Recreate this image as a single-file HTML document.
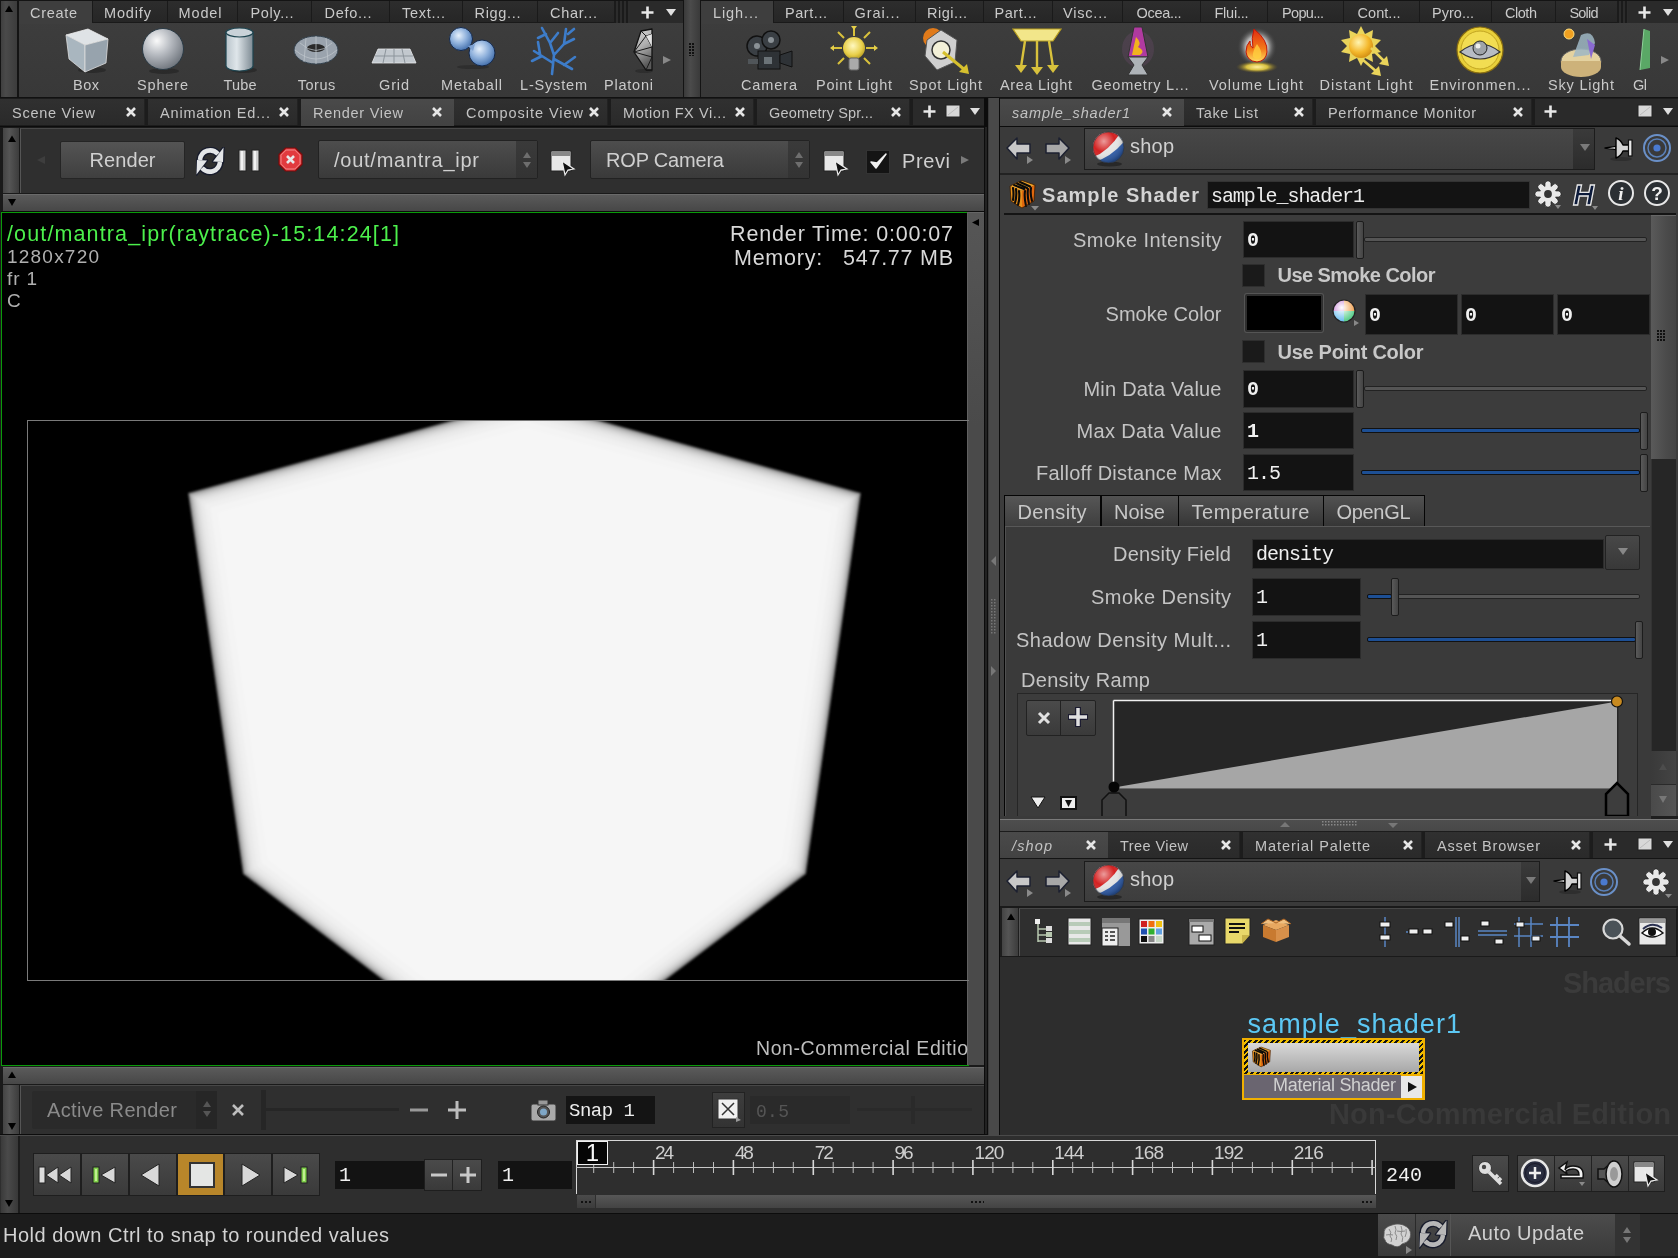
<!DOCTYPE html><html><head><meta charset="utf-8"><style>
html,body{margin:0;padding:0;width:1678px;height:1258px;overflow:hidden;background:#2b2b2b;}
.a{position:absolute;box-sizing:border-box;}
.t{white-space:pre;}
body{font-family:"Liberation Sans",sans-serif;}
</style></head><body>
<div class="a" style="left:0;top:0;width:1678px;height:1258px;will-change:transform;overflow:hidden">
<div class="a" style="left:0px;top:0px;width:1678px;height:1258px;background:#1e1e1e;"></div>
<div class="a" style="left:0px;top:0px;width:1678px;height:98px;background:#141414;"></div>
<div class="a" style="left:1px;top:1px;width:16px;height:96px;background:linear-gradient(90deg,#3f3f3f,#4a4a4a 30%,#3c3c3c);"></div>
<svg class="a" style="left:4px;top:4px;" width="10" height="9" viewBox="0 0 10 9"><path d="M1 8 L5 1.5 L9 8 Z" fill="#000"/></svg>
<div class="a" style="left:19px;top:1px;width:664px;height:96px;background:linear-gradient(#3e3e3e,#383838);"></div>
<div class="a" style="left:701px;top:1px;width:977px;height:96px;background:linear-gradient(#3e3e3e,#383838);"></div>
<div class="a" style="left:684px;top:0px;width:16px;height:98px;background:linear-gradient(90deg,#3a3a3a,#4b4b4b 40%,#3a3a3a);"></div>
<svg class="a" style="left:688px;top:42px;" width="8" height="14" viewBox="0 0 8 14"><rect x="1" y="1" width="2" height="2" fill="#111"/><rect x="4" y="1" width="2" height="2" fill="#111"/><rect x="1" y="4" width="2" height="2" fill="#111"/><rect x="4" y="4" width="2" height="2" fill="#111"/><rect x="1" y="7" width="2" height="2" fill="#111"/><rect x="4" y="7" width="2" height="2" fill="#111"/><rect x="1" y="10" width="2" height="2" fill="#111"/><rect x="4" y="10" width="2" height="2" fill="#111"/><rect x="1" y="13" width="2" height="2" fill="#111"/><rect x="4" y="13" width="2" height="2" fill="#111"/></svg>
<div class="a" style="left:92px;top:1px;width:591px;height:22px;background:#1a1a1a;"></div>
<div class="a" style="left:19px;top:1px;width:73px;height:23px;background:#3e3e3e;"></div>
<div class="a t" style="left:30.00px;top:4.88px;font-size:14.5px;line-height:16.20px;color:#c9c9c9;font-family:'Liberation Sans',sans-serif;letter-spacing:0.695px;">Create</div>
<div class="a" style="left:93px;top:1px;width:74px;height:21px;background:linear-gradient(#2d2d2d,#262626);"></div>
<div class="a t" style="left:104.00px;top:4.88px;font-size:14.5px;line-height:16.20px;color:#c9c9c9;font-family:'Liberation Sans',sans-serif;letter-spacing:0.858px;">Modify</div>
<div class="a" style="left:168px;top:1px;width:69px;height:21px;background:linear-gradient(#2d2d2d,#262626);"></div>
<div class="a t" style="left:178.50px;top:4.88px;font-size:14.5px;line-height:16.20px;color:#c9c9c9;font-family:'Liberation Sans',sans-serif;letter-spacing:0.876px;">Model</div>
<div class="a" style="left:238px;top:1px;width:73px;height:21px;background:linear-gradient(#2d2d2d,#262626);"></div>
<div class="a t" style="left:250.50px;top:4.88px;font-size:14.5px;line-height:16.20px;color:#c9c9c9;font-family:'Liberation Sans',sans-serif;letter-spacing:0.631px;">Poly...</div>
<div class="a" style="left:312px;top:1px;width:77px;height:21px;background:linear-gradient(#2d2d2d,#262626);"></div>
<div class="a t" style="left:324.50px;top:4.88px;font-size:14.5px;line-height:16.20px;color:#c9c9c9;font-family:'Liberation Sans',sans-serif;letter-spacing:0.714px;">Defo...</div>
<div class="a" style="left:390px;top:1px;width:72px;height:21px;background:linear-gradient(#2d2d2d,#262626);"></div>
<div class="a t" style="left:402.00px;top:4.88px;font-size:14.5px;line-height:16.20px;color:#c9c9c9;font-family:'Liberation Sans',sans-serif;letter-spacing:0.720px;">Text...</div>
<div class="a" style="left:463px;top:1px;width:74px;height:21px;background:linear-gradient(#2d2d2d,#262626);"></div>
<div class="a t" style="left:474.50px;top:4.88px;font-size:14.5px;line-height:16.20px;color:#c9c9c9;font-family:'Liberation Sans',sans-serif;letter-spacing:0.682px;">Rigg...</div>
<div class="a" style="left:538px;top:1px;width:76px;height:21px;background:linear-gradient(#2d2d2d,#262626);"></div>
<div class="a t" style="left:550.00px;top:4.88px;font-size:14.5px;line-height:16.20px;color:#c9c9c9;font-family:'Liberation Sans',sans-serif;letter-spacing:0.714px;">Char...</div>
<div class="a" style="left:614px;top:1px;width:16px;height:22px;background:repeating-linear-gradient(90deg,#1b1b1b 0 2px,#2c2c2c 2px 4px);"></div>
<div class="a" style="left:630px;top:1px;width:53px;height:22px;background:#2a2a2a;"></div>
<svg class="a" style="left:640px;top:5px;" width="15" height="15" viewBox="0 0 15 15"><path d="M7.5 1.5v12M1.5 7.5h12" stroke="#e8e8e8" stroke-width="2.6"/></svg>
<svg class="a" style="left:665px;top:8px;" width="12" height="9" viewBox="0 0 12 9"><path d="M1 1h10L6 8z" fill="#e0e0e0"/></svg>
<div class="a" style="left:702px;top:1px;width:976px;height:22px;background:#1a1a1a;"></div>
<div class="a" style="left:702px;top:1px;width:71px;height:23px;background:#3e3e3e;"></div>
<div class="a t" style="left:713.00px;top:4.88px;font-size:14.5px;line-height:16.20px;color:#c9c9c9;font-family:'Liberation Sans',sans-serif;letter-spacing:0.917px;">Ligh...</div>
<div class="a" style="left:774px;top:1px;width:69px;height:21px;background:linear-gradient(#2d2d2d,#262626);"></div>
<div class="a t" style="left:785.00px;top:4.88px;font-size:14.5px;line-height:16.20px;color:#c9c9c9;font-family:'Liberation Sans',sans-serif;letter-spacing:0.554px;">Part...</div>
<div class="a" style="left:844px;top:1px;width:71px;height:21px;background:linear-gradient(#2d2d2d,#262626);"></div>
<div class="a t" style="left:854.50px;top:4.88px;font-size:14.5px;line-height:16.20px;color:#c9c9c9;font-family:'Liberation Sans',sans-serif;letter-spacing:0.920px;">Grai...</div>
<div class="a" style="left:916px;top:1px;width:67px;height:21px;background:linear-gradient(#2d2d2d,#262626);"></div>
<div class="a t" style="left:927.00px;top:4.88px;font-size:14.5px;line-height:16.20px;color:#c9c9c9;font-family:'Liberation Sans',sans-serif;letter-spacing:0.489px;">Rigi...</div>
<div class="a" style="left:984px;top:1px;width:68px;height:21px;background:linear-gradient(#2d2d2d,#262626);"></div>
<div class="a t" style="left:994.50px;top:4.88px;font-size:14.5px;line-height:16.20px;color:#c9c9c9;font-family:'Liberation Sans',sans-serif;letter-spacing:0.554px;">Part...</div>
<div class="a" style="left:1053px;top:1px;width:69px;height:21px;background:linear-gradient(#2d2d2d,#262626);"></div>
<div class="a t" style="left:1063.00px;top:4.88px;font-size:14.5px;line-height:16.20px;color:#c9c9c9;font-family:'Liberation Sans',sans-serif;letter-spacing:0.797px;">Visc...</div>
<div class="a" style="left:1123px;top:1px;width:77px;height:21px;background:linear-gradient(#2d2d2d,#262626);"></div>
<div class="a t" style="left:1136.50px;top:4.88px;font-size:14.5px;line-height:16.20px;color:#c9c9c9;font-family:'Liberation Sans',sans-serif;letter-spacing:-0.290px;">Ocea...</div>
<div class="a" style="left:1201px;top:1px;width:66px;height:21px;background:linear-gradient(#2d2d2d,#262626);"></div>
<div class="a t" style="left:1214.50px;top:4.88px;font-size:14.5px;line-height:16.20px;color:#c9c9c9;font-family:'Liberation Sans',sans-serif;letter-spacing:-0.242px;">Flui...</div>
<div class="a" style="left:1268px;top:1px;width:75px;height:21px;background:linear-gradient(#2d2d2d,#262626);"></div>
<div class="a t" style="left:1282.00px;top:4.88px;font-size:14.5px;line-height:16.20px;color:#c9c9c9;font-family:'Liberation Sans',sans-serif;letter-spacing:-0.658px;">Popu...</div>
<div class="a" style="left:1344px;top:1px;width:75px;height:21px;background:linear-gradient(#2d2d2d,#262626);"></div>
<div class="a t" style="left:1357.50px;top:4.88px;font-size:14.5px;line-height:16.20px;color:#c9c9c9;font-family:'Liberation Sans',sans-serif;letter-spacing:0.048px;">Cont...</div>
<div class="a" style="left:1420px;top:1px;width:71px;height:21px;background:linear-gradient(#2d2d2d,#262626);"></div>
<div class="a t" style="left:1432.00px;top:4.88px;font-size:14.5px;line-height:16.20px;color:#c9c9c9;font-family:'Liberation Sans',sans-serif;letter-spacing:0.017px;">Pyro...</div>
<div class="a" style="left:1492px;top:1px;width:63px;height:21px;background:linear-gradient(#2d2d2d,#262626);"></div>
<div class="a t" style="left:1505.00px;top:4.88px;font-size:14.5px;line-height:16.20px;color:#c9c9c9;font-family:'Liberation Sans',sans-serif;letter-spacing:-0.463px;">Cloth</div>
<div class="a" style="left:1556px;top:1px;width:61px;height:21px;background:linear-gradient(#2d2d2d,#262626);"></div>
<div class="a t" style="left:1569.50px;top:4.88px;font-size:14.5px;line-height:16.20px;color:#c9c9c9;font-family:'Liberation Sans',sans-serif;letter-spacing:-0.811px;">Solid</div>
<div class="a" style="left:1617px;top:1px;width:11px;height:22px;background:repeating-linear-gradient(90deg,#1b1b1b 0 2px,#2c2c2c 2px 4px);"></div>
<div class="a" style="left:1628px;top:1px;width:50px;height:22px;background:#2a2a2a;"></div>
<svg class="a" style="left:1637px;top:5px;" width="15" height="15" viewBox="0 0 15 15"><path d="M7.5 1.5v12M1.5 7.5h12" stroke="#e8e8e8" stroke-width="2.6"/></svg>
<svg class="a" style="left:1662px;top:8px;" width="12" height="9" viewBox="0 0 12 9"><path d="M1 1h10L6 8z" fill="#e0e0e0"/></svg>
<div class="a" style="left:0px;top:97px;width:1678px;height:1px;background:#111;"></div>
<div class="a t" style="left:73.00px;top:76.88px;font-size:14.5px;line-height:16.20px;color:#c9c9c9;font-family:'Liberation Sans',sans-serif;letter-spacing:0.507px;">Box</div>
<div class="a t" style="left:137.00px;top:76.88px;font-size:14.5px;line-height:16.20px;color:#c9c9c9;font-family:'Liberation Sans',sans-serif;letter-spacing:0.848px;">Sphere</div>
<div class="a t" style="left:223.50px;top:76.88px;font-size:14.5px;line-height:16.20px;color:#c9c9c9;font-family:'Liberation Sans',sans-serif;letter-spacing:0.162px;">Tube</div>
<div class="a t" style="left:297.75px;top:76.88px;font-size:14.5px;line-height:16.20px;color:#c9c9c9;font-family:'Liberation Sans',sans-serif;letter-spacing:0.510px;">Torus</div>
<div class="a t" style="left:379.00px;top:76.88px;font-size:14.5px;line-height:16.20px;color:#c9c9c9;font-family:'Liberation Sans',sans-serif;letter-spacing:0.869px;">Grid</div>
<div class="a t" style="left:441.00px;top:76.88px;font-size:14.5px;line-height:16.20px;color:#c9c9c9;font-family:'Liberation Sans',sans-serif;letter-spacing:0.884px;">Metaball</div>
<div class="a t" style="left:520.00px;top:76.88px;font-size:14.5px;line-height:16.20px;color:#c9c9c9;font-family:'Liberation Sans',sans-serif;letter-spacing:0.823px;">L-System</div>
<div class="a t" style="left:604.00px;top:76.88px;font-size:14.5px;line-height:16.20px;color:#c9c9c9;font-family:'Liberation Sans',sans-serif;letter-spacing:0.777px;">Platoni</div>
<div class="a t" style="left:741.00px;top:76.88px;font-size:14.5px;line-height:16.20px;color:#c9c9c9;font-family:'Liberation Sans',sans-serif;letter-spacing:0.885px;">Camera</div>
<div class="a t" style="left:816.00px;top:76.88px;font-size:14.5px;line-height:16.20px;color:#c9c9c9;font-family:'Liberation Sans',sans-serif;letter-spacing:0.748px;">Point Light</div>
<div class="a t" style="left:909.00px;top:76.88px;font-size:14.5px;line-height:16.20px;color:#c9c9c9;font-family:'Liberation Sans',sans-serif;letter-spacing:0.855px;">Spot Light</div>
<div class="a t" style="left:1000.00px;top:76.88px;font-size:14.5px;line-height:16.20px;color:#c9c9c9;font-family:'Liberation Sans',sans-serif;letter-spacing:0.655px;">Area Light</div>
<div class="a t" style="left:1091.50px;top:76.88px;font-size:14.5px;line-height:16.20px;color:#c9c9c9;font-family:'Liberation Sans',sans-serif;letter-spacing:0.764px;">Geometry L...</div>
<div class="a t" style="left:1209.00px;top:76.88px;font-size:14.5px;line-height:16.20px;color:#c9c9c9;font-family:'Liberation Sans',sans-serif;letter-spacing:0.924px;">Volume Light</div>
<div class="a t" style="left:1319.50px;top:76.88px;font-size:14.5px;line-height:16.20px;color:#c9c9c9;font-family:'Liberation Sans',sans-serif;letter-spacing:1.033px;">Distant Light</div>
<div class="a t" style="left:1429.50px;top:76.88px;font-size:14.5px;line-height:16.20px;color:#c9c9c9;font-family:'Liberation Sans',sans-serif;letter-spacing:0.962px;">Environmen...</div>
<div class="a t" style="left:1548.00px;top:76.88px;font-size:14.5px;line-height:16.20px;color:#c9c9c9;font-family:'Liberation Sans',sans-serif;letter-spacing:0.795px;">Sky Light</div>
<div class="a t" style="left:1633.00px;top:76.88px;font-size:14.5px;line-height:16.20px;color:#c9c9c9;font-family:'Liberation Sans',sans-serif;letter-spacing:-0.500px;">Gl</div>
<svg class="a" style="left:62px;top:26px;" width="48" height="50" viewBox="0 0 48 50"><defs>
<radialGradient id="gSph" cx="0.35" cy="0.3" r="0.75"><stop offset="0" stop-color="#fafafa"/><stop offset="0.45" stop-color="#b8bcc2"/><stop offset="1" stop-color="#6d737b"/></radialGradient>
<radialGradient id="gBlue" cx="0.4" cy="0.35" r="0.7"><stop offset="0" stop-color="#e6f0fb"/><stop offset="0.5" stop-color="#8fb1dc"/><stop offset="1" stop-color="#3d6aa8"/></radialGradient>
<linearGradient id="gTube" x1="0" x2="1"><stop offset="0" stop-color="#b9c4cb"/><stop offset="0.4" stop-color="#dfe6ea"/><stop offset="1" stop-color="#7d8a93"/></linearGradient>
<radialGradient id="gYel" cx="0.45" cy="0.4" r="0.7"><stop offset="0" stop-color="#fff8c0"/><stop offset="0.6" stop-color="#e8cf4a"/><stop offset="1" stop-color="#a58a14"/></radialGradient>
<radialGradient id="gSun" cx="0.4" cy="0.35" r="0.7"><stop offset="0" stop-color="#fff4b0"/><stop offset="0.6" stop-color="#f4b82c"/><stop offset="1" stop-color="#d08a10"/></radialGradient>
</defs><ellipse cx="30" cy="44" rx="14" ry="3" fill="#222" opacity=".6"/>
<path d="M4 9 L26 3 L46 13 L23 19Z" fill="#dfe3e6" stroke="#eee" stroke-width=".8"/>
<path d="M4 9 L23 19 L23 46 L7 33Z" fill="#a9b6bf" stroke="#ddd" stroke-width=".8"/>
<path d="M23 19 L46 13 L44 37 L23 46Z" fill="#97a3ad" stroke="#ddd" stroke-width=".8"/></svg>
<svg class="a" style="left:138px;top:26px;" width="50" height="50" viewBox="0 0 50 50"><ellipse cx="26" cy="45" rx="15" ry="3" fill="#222" opacity=".6"/><circle cx="25" cy="23" r="20.5" fill="url(#gSph)" stroke="#2a3a45" stroke-width="1"/></svg>
<svg class="a" style="left:222px;top:26px;" width="38" height="50" viewBox="0 0 38 50"><ellipse cx="22" cy="44" rx="13" ry="3" fill="#222" opacity=".6"/>
<path d="M4 6 V40 A13.5 5 0 0 0 31 40 V6Z" fill="url(#gTube)" stroke="#1f4550" stroke-width="1.2"/>
<ellipse cx="17.5" cy="6.5" rx="13.5" ry="4.5" fill="#c9d2d8" stroke="#1f4550" stroke-width="1.2"/></svg>
<svg class="a" style="left:292px;top:34px;" width="50" height="36" viewBox="0 0 50 36"><ellipse cx="24" cy="16" rx="22" ry="14" fill="#9aa3ad" stroke="#34424e" stroke-width="1"/>
<ellipse cx="24" cy="14" rx="9" ry="4" fill="#2a2a2a"/>
<path d="M3 16 Q24 34 45 16 M8 9 Q24 24 40 9" fill="none" stroke="#c2c8ce" stroke-width=".7"/>
<path d="M14 4 L12 28 M24 2 V30 M34 4 L36 28" stroke="#c2c8ce" stroke-width=".7"/></svg>
<svg class="a" style="left:370px;top:46px;" width="48" height="20" viewBox="0 0 48 20"><path d="M8 3 H40 L46 17 H2Z" fill="#c2c8ce" stroke="#e8eaec" stroke-width=".8"/><path d="M5 10H43M16 3L13 17M24 3V17M32 3L35 17" stroke="#8c949b" stroke-width="1"/></svg>
<svg class="a" style="left:446px;top:25px;" width="52" height="45" viewBox="0 0 52 45"><ellipse cx="27" cy="42" rx="16" ry="2" fill="#222" opacity=".5"/><circle cx="15" cy="14" r="11.5" fill="url(#gBlue)" stroke="#14284a" stroke-width="1"/><circle cx="36" cy="28" r="13" fill="url(#gBlue)" stroke="#14284a" stroke-width="1"/><path d="M22 21 L29 19 L27 26Z" fill="#7fa2d2"/></svg>
<svg class="a" style="left:528px;top:25px;" width="52" height="52" viewBox="0 0 52 52"><g stroke="#3d7cc9" stroke-width="2.6" fill="none" stroke-linecap="round"><path d="M24 49 L26 30 L22 18 L14 3 M26 30 L36 19 L38 4 M22 18 L30 8 M36 19 L46 14 M26 34 L44 44 M25 38 L6 26 M14 31 L4 36 M12 29 L10 17 M36 40 L47 32 M40 9 L46 4 M18 9 L10 13"/></g></svg>
<svg class="a" style="left:632px;top:27px;" width="22" height="46" viewBox="0 0 22 46"><defs><linearGradient id="gPl" x1="0" y1="0" x2="0.3" y2="1"><stop offset="0" stop-color="#d8d8d8"/><stop offset=".5" stop-color="#b0b0b0"/><stop offset="1" stop-color="#5a5a5a"/></linearGradient></defs>
<ellipse cx="12" cy="44" rx="9" ry="2" fill="#222" opacity=".5"/>
<path d="M20 2 L9 4 L2 25 L14 43 L20 43Z" fill="url(#gPl)" stroke="#111" stroke-width="1.3" stroke-linejoin="round"/>
<path d="M9 4 L14 9 L20 7 M14 9 L2 25 M14 9 L20 20 M2 25 L20 30 M2 25 L20 20 M20 30 L14 43" stroke="#1a1a1a" stroke-width="1" fill="none"/>
<path d="M14 9 L20 7 L20 20Z" fill="#f0f0f0" opacity=".8"/></svg>
<svg class="a" style="left:662px;top:55px;" width="10" height="10" viewBox="0 0 10 10"><path d="M1 1 L9 5 L1 9Z" fill="#888"/></svg>
<svg class="a" style="left:744px;top:29px;" width="52" height="46" viewBox="0 0 52 46"><circle cx="13" cy="17" r="10" fill="#3a3f44" stroke="#111" stroke-width="1.5"/><circle cx="27" cy="11" r="9" fill="#3a3f44" stroke="#111" stroke-width="1.5"/>
<circle cx="13" cy="17" r="3" fill="#8a9196"/><circle cx="27" cy="11" r="3" fill="#8a9196"/>
<rect x="14" y="22" width="22" height="18" fill="#2e3236" stroke="#111"/><path d="M36 26 L48 22 V38 L36 34Z" fill="#2e3236" stroke="#111"/><rect x="20" y="28" width="8" height="7" fill="#6b7378"/><rect x="4" y="30" width="10" height="5" fill="#505559"/></svg>
<svg class="a" style="left:828px;top:26px;" width="52" height="50" viewBox="0 0 52 50"><g stroke="#d8c13c" stroke-width="2" fill="#e5cf4a"><path d="M26 2 V10 M6 22 H14 M38 22 H46 M10 6 L16 12 M42 6 L36 12 M10 38 L16 32 M42 38 L36 32"/></g>
<path d="M23 0 L26 4 L29 0Z M2 22 L6 19 V25Z M50 22 L46 19 V25Z" fill="#e5cf4a"/>
<circle cx="26" cy="22" r="11" fill="url(#gYel)"/><rect x="21" y="32" width="10" height="12" rx="2" fill="#aaa" stroke="#666"/></svg>
<svg class="a" style="left:921px;top:26px;" width="52" height="50" viewBox="0 0 52 50"><circle cx="12" cy="12" r="10" fill="#e07a1a"/><path d="M6 14 L20 4 L36 14 L34 36 L16 44 L4 30Z" fill="#cfcfcf" stroke="#555" stroke-width="1"/>
<circle cx="20" cy="24" r="9" fill="#f3f0d8" stroke="#333" stroke-width="1.5"/><path d="M22 26 L44 44" stroke="#d6c02e" stroke-width="3"/><path d="M48 48 L38 46 L46 38Z" fill="#d6c02e"/></svg>
<svg class="a" style="left:1011px;top:27px;" width="52" height="50" viewBox="0 0 52 50"><path d="M2 2 H50 L42 14 H10Z" fill="#f2e68a" stroke="#b89e1e" stroke-width="1.2"/><g stroke="#d8c13c" stroke-width="2.4"><path d="M14 14 L10 40 M26 14 V42 M38 14 L42 40"/></g>
<path d="M4 38 H16 L10 46Z M20 40 H32 L26 48Z M36 38 H48 L42 46Z" fill="#d8c13c"/></svg>
<svg class="a" style="left:1116px;top:25px;" width="44" height="52" viewBox="0 0 44 52"><ellipse cx="22" cy="24" rx="16" ry="18" fill="#6a4a6a" opacity=".35"/><path d="M18 2 H26 L32 32 H12Z" fill="#b03aa0" stroke="#333" stroke-width="1"/>
<path d="M20 12 Q26 18 22 22 Q30 26 24 30 H16 Q18 20 20 12Z" fill="#f2b21e"/><path d="M12 32 H32 L26 40 L32 50 H12 L18 40Z" fill="#aeb3b8" stroke="#333"/></svg>
<svg class="a" style="left:1232px;top:26px;" width="50" height="48" viewBox="0 0 50 48"><defs><radialGradient id="gVol" cx=".5" cy=".5" r=".5"><stop offset="0" stop-color="#e0e0e0"/><stop offset=".55" stop-color="#b8b8b8"/><stop offset="1" stop-color="#3a3a3a" stop-opacity="0"/></radialGradient>
<radialGradient id="gVolY" cx=".5" cy=".5" r=".5"><stop offset="0" stop-color="#fff0a0"/><stop offset=".5" stop-color="#d8c040"/><stop offset="1" stop-color="#6a5a20" stop-opacity="0"/></radialGradient>
<linearGradient id="gFl" x1="0" y1="0" x2="0" y2="1"><stop offset="0" stop-color="#e02a10"/><stop offset=".6" stop-color="#f47a18"/><stop offset="1" stop-color="#ffe060"/></linearGradient></defs>
<circle cx="25" cy="21" r="20" fill="url(#gVol)"/><ellipse cx="25" cy="41" rx="21" ry="6" fill="url(#gVolY)"/>
<path d="M22 3 Q36 14 35 26 Q34 35 25 36 Q15 35 14 26 Q14 19 18 15 Q18 21 21 22 Q19 12 22 3Z" fill="url(#gFl)" stroke="#c01808" stroke-width="1"/>
<path d="M25 18 Q31 26 29 31 Q25 35 21 31 Q20 26 25 18Z" fill="#ffd040" opacity=".8"/></svg>
<svg class="a" style="left:1341px;top:26px;" width="52" height="50" viewBox="0 0 52 50"><path d="M20 0 L24 8 L32 4 L31 12 L40 14 L34 20 L40 26 L31 28 L32 36 L24 32 L20 40 L16 32 L8 36 L9 28 L0 26 L6 20 L0 14 L9 12 L8 4 L16 8Z" fill="#ead45a"/>
<circle cx="20" cy="20" r="12" fill="url(#gSun)"/><g stroke="#ead45a" stroke-width="2.5"><path d="M30 22 L44 36 M22 34 L36 46"/></g><path d="M48 40 L46 30 L38 38Z M40 50 L38 40 L30 48Z" fill="#ead45a"/></svg>
<svg class="a" style="left:1455px;top:26px;" width="50" height="50" viewBox="0 0 50 50"><circle cx="25" cy="24" r="23" fill="#e8cf3a" stroke="#8a6e10" stroke-width="1.2"/><circle cx="25" cy="24" r="19" fill="#f2dd52" stroke="#c2a521" stroke-width="1"/>
<path d="M5 26 Q25 10 45 26 Q25 40 5 26Z" fill="#b7bcc4" stroke="#333" stroke-width="1.2"/><circle cx="25" cy="22" r="7" fill="#9ea3a8" stroke="#222"/><circle cx="23" cy="20" r="2.5" fill="#eee"/></svg>
<svg class="a" style="left:1557px;top:25px;" width="50" height="52" viewBox="0 0 50 52"><ellipse cx="24" cy="36" rx="20" ry="12" fill="#e4d2a0" stroke="#666" stroke-width="1"/><path d="M4 36 V42 A20 10 0 0 0 44 42 V36" fill="#cdb27a"/>
<path d="M16 32 L24 10 Q36 4 38 18 L32 30Z" fill="#9fb7c4" opacity=".85"/><path d="M30 14 L38 20 L34 34 Z" fill="#8a6ad0"/><circle cx="12" cy="9" r="5" fill="#f0a020" stroke="#ffe080"/></svg>
<svg class="a" style="left:1638px;top:28px;" width="14" height="44" viewBox="0 0 14 44"><path d="M6 1 L12 3 V40 L2 42Z" fill="#5aa866"/><path d="M6 1 L2 42" stroke="#8fd29a" stroke-width="1"/></svg>
<svg class="a" style="left:1660px;top:55px;" width="10" height="10" viewBox="0 0 10 10"><path d="M1 1 L9 5 L1 9Z" fill="#888"/></svg>
<div class="a" style="left:0px;top:98px;width:985px;height:29px;background:#1c1c1c;"></div>
<div class="a" style="left:0px;top:99px;width:145px;height:26px;background:linear-gradient(#303030,#2a2a2a);border-right:1px solid #222;"></div>
<div class="a t" style="left:12.00px;top:104.88px;font-size:14.5px;line-height:16.20px;color:#c3c3c3;font-family:'Liberation Sans',sans-serif;letter-spacing:0.743px;">Scene View</div>
<svg class="a" style="left:125px;top:106px;" width="12" height="12" viewBox="0 0 12 12"><path d="M2 2L10 10M10 2L2 10" stroke="#e6e6e6" stroke-width="2.6"/></svg>
<div class="a" style="left:148px;top:99px;width:150px;height:26px;background:linear-gradient(#303030,#2a2a2a);border-right:1px solid #222;"></div>
<div class="a t" style="left:160.00px;top:104.88px;font-size:14.5px;line-height:16.20px;color:#c3c3c3;font-family:'Liberation Sans',sans-serif;letter-spacing:0.834px;">Animation Ed...</div>
<svg class="a" style="left:278px;top:106px;" width="12" height="12" viewBox="0 0 12 12"><path d="M2 2L10 10M10 2L2 10" stroke="#e6e6e6" stroke-width="2.6"/></svg>
<div class="a" style="left:301px;top:99px;width:153px;height:27px;background:linear-gradient(#4a4a4a,#424242);"></div>
<div class="a t" style="left:313.00px;top:104.88px;font-size:14.5px;line-height:16.20px;color:#c3c3c3;font-family:'Liberation Sans',sans-serif;letter-spacing:0.724px;">Render View</div>
<svg class="a" style="left:431px;top:106px;" width="12" height="12" viewBox="0 0 12 12"><path d="M2 2L10 10M10 2L2 10" stroke="#e6e6e6" stroke-width="2.6"/></svg>
<div class="a" style="left:454px;top:99px;width:154px;height:26px;background:linear-gradient(#303030,#2a2a2a);border-right:1px solid #222;"></div>
<div class="a t" style="left:466.00px;top:104.88px;font-size:14.5px;line-height:16.20px;color:#c3c3c3;font-family:'Liberation Sans',sans-serif;letter-spacing:0.961px;">Composite View</div>
<svg class="a" style="left:588px;top:106px;" width="12" height="12" viewBox="0 0 12 12"><path d="M2 2L10 10M10 2L2 10" stroke="#e6e6e6" stroke-width="2.6"/></svg>
<div class="a" style="left:611px;top:99px;width:143px;height:26px;background:linear-gradient(#303030,#2a2a2a);border-right:1px solid #222;"></div>
<div class="a t" style="left:623.00px;top:104.88px;font-size:14.5px;line-height:16.20px;color:#c3c3c3;font-family:'Liberation Sans',sans-serif;letter-spacing:0.584px;">Motion FX Vi...</div>
<svg class="a" style="left:734px;top:106px;" width="12" height="12" viewBox="0 0 12 12"><path d="M2 2L10 10M10 2L2 10" stroke="#e6e6e6" stroke-width="2.6"/></svg>
<div class="a" style="left:757px;top:99px;width:153px;height:26px;background:linear-gradient(#303030,#2a2a2a);border-right:1px solid #222;"></div>
<div class="a t" style="left:769.00px;top:104.88px;font-size:14.5px;line-height:16.20px;color:#c3c3c3;font-family:'Liberation Sans',sans-serif;letter-spacing:0.176px;">Geometry Spr...</div>
<svg class="a" style="left:890px;top:106px;" width="12" height="12" viewBox="0 0 12 12"><path d="M2 2L10 10M10 2L2 10" stroke="#e6e6e6" stroke-width="2.6"/></svg>
<div class="a" style="left:913px;top:99px;width:72px;height:26px;background:#2a2a2a;"></div>
<svg class="a" style="left:922px;top:104px;" width="15" height="15" viewBox="0 0 15 15"><path d="M7.5 1.5v12M1.5 7.5h12" stroke="#e8e8e8" stroke-width="2.6"/></svg>
<svg class="a" style="left:945px;top:103px;" width="16" height="16" viewBox="0 0 16 16"><rect x="1" y="2" width="14" height="12" fill="#d8d8d8" stroke="#222" stroke-width="1"/><path d="M3 12 L13 4" stroke="#bbb"/></svg>
<svg class="a" style="left:969px;top:107px;" width="12" height="9" viewBox="0 0 12 9"><path d="M1 1h10L6 8z" fill="#e0e0e0"/></svg>
<div class="a" style="left:0px;top:126px;width:985px;height:1px;background:#0c0c0c;"></div>
<div class="a" style="left:0px;top:127px;width:986px;height:1008px;background:#1a1a1a;"></div>
<div class="a" style="left:3px;top:128px;width:16px;height:65px;background:linear-gradient(90deg,#444,#555 40%,#3c3c3c);"></div>
<svg class="a" style="left:7px;top:134px;" width="10" height="9" viewBox="0 0 10 9"><path d="M1 8 L5 1.5 L9 8 Z" fill="#000"/></svg>
<div class="a" style="left:20px;top:128px;width:965px;height:65px;background:#2f2f2f;border-left:1px solid #555;border-top:1px solid #474747;"></div>
<svg class="a" style="left:36px;top:155px;" width="10" height="10" viewBox="0 0 10 10"><path d="M9 1 L1 5 L9 9Z" fill="#3e3e3e"/></svg>
<div class="a" style="left:60px;top:141px;width:125px;height:38px;background:linear-gradient(#545454,#3f3f3f);border:1px solid #252525;border-radius:2px;"></div>
<div class="a t" style="left:89.50px;top:149.40px;font-size:20px;line-height:22.34px;color:#d0d0d0;font-family:'Liberation Sans',sans-serif;letter-spacing:0.080px;">Render</div>
<svg class="a" style="left:196px;top:147px;" width="30" height="30" viewBox="0 0 30 30"><g transform="scale(1.0)"><g fill="none" stroke="#181c2c" stroke-width="7.5" stroke-linecap="butt"><path d="M4 13 C5 3 16 0.5 22 7"/><path d="M24 15 C23 25 12 27.5 6 21"/></g>
<polygon points="27.5,0.5 27,15 17,14.5" fill="#181c2c" stroke="#181c2c" stroke-width="2.5" stroke-linejoin="round"/><polygon points="0.5,27.5 1,13 11,13.5" fill="#181c2c" stroke="#181c2c" stroke-width="2.5" stroke-linejoin="round"/>
<g fill="none" stroke="#e4e6e8" stroke-width="4.6" stroke-linecap="butt"><path d="M4 13 C5 3 16 0.5 22 7"/><path d="M24 15 C23 25 12 27.5 6 21"/></g>
<polygon points="27.5,0.5 27,15 17,14.5" fill="#e4e6e8"/><polygon points="0.5,27.5 1,13 11,13.5" fill="#e4e6e8"/></g></svg>
<svg class="a" style="left:238px;top:149px;" width="24" height="24" viewBox="0 0 24 24"><rect x="1" y="1" width="7" height="21" fill="#d0d0d0" stroke="#222"/><rect x="14" y="1" width="7" height="21" fill="#d0d0d0" stroke="#222"/><rect x="3" y="2" width="2" height="19" fill="#f2f2f2"/><rect x="16" y="2" width="2" height="19" fill="#f2f2f2"/></svg>
<svg class="a" style="left:278px;top:147px;" width="25" height="25" viewBox="0 0 25 25"><path d="M7.5 1 H17.5 L24 7.5 V17.5 L17.5 24 H7.5 L1 17.5 V7.5Z" fill="#e23a3e" stroke="#7a0a0a" stroke-width="1.2"/><path d="M8.2 3 H16.8 L22 8.2 V16.8 L16.8 22 H8.2 L3 16.8 V8.2Z" fill="none" stroke="#f08a8a" stroke-width="1"/><path d="M9 9L16 16M16 9L9 16" stroke="#e8e8e8" stroke-width="2.6"/></svg>
<div class="a" style="left:318px;top:140px;width:220px;height:39px;background:linear-gradient(#4d4d4d,#3a3a3a);border:1px solid #222;border-radius:2px;"></div>
<div class="a" style="left:516px;top:141px;width:21px;height:37px;background:linear-gradient(#3a3a3a,#333);"></div>
<svg class="a" style="left:522.0px;top:150.5px;" width="10" height="18" viewBox="0 0 10 18"><path d="M1 7 L5 1 L9 7Z M1 11 L5 17 L9 11Z" fill="#6e6e6e"/></svg>
<div class="a t" style="left:334.00px;top:149.40px;font-size:20px;line-height:22.34px;color:#cfcfcf;font-family:'Liberation Sans',sans-serif;letter-spacing:0.749px;">/out/mantra_ipr</div>
<svg class="a" style="left:550px;top:149px;" width="28" height="28" viewBox="0 0 28 28"><rect x="1" y="2" width="20" height="20" fill="#e8e8e8" stroke="#222"/><rect x="2" y="3" width="18" height="4" fill="#888"/><path d="M12 12 L24 20 L18 21 L15 26Z" fill="#111" stroke="#eee" stroke-width="1.2"/></svg>
<div class="a" style="left:590px;top:140px;width:220px;height:39px;background:linear-gradient(#4d4d4d,#3a3a3a);border:1px solid #222;border-radius:2px;"></div>
<div class="a" style="left:788px;top:141px;width:21px;height:37px;background:linear-gradient(#3a3a3a,#333);"></div>
<svg class="a" style="left:794.0px;top:150.5px;" width="10" height="18" viewBox="0 0 10 18"><path d="M1 7 L5 1 L9 7Z M1 11 L5 17 L9 11Z" fill="#6e6e6e"/></svg>
<div class="a t" style="left:606.00px;top:149.40px;font-size:20px;line-height:22.34px;color:#cfcfcf;font-family:'Liberation Sans',sans-serif;letter-spacing:-0.186px;">ROP Camera</div>
<svg class="a" style="left:823px;top:149px;" width="28" height="28" viewBox="0 0 28 28"><rect x="1" y="2" width="20" height="20" fill="#e8e8e8" stroke="#222"/><rect x="2" y="3" width="18" height="4" fill="#888"/><path d="M12 12 L24 20 L18 21 L15 26Z" fill="#111" stroke="#eee" stroke-width="1.2"/></svg>
<div class="a" style="left:866px;top:150px;width:24px;height:24px;background:#141414;border:1px solid #333;"></div>
<svg class="a" style="left:866px;top:150px;" width="24" height="24" viewBox="0 0 24 24"><path d="M5 12 L10 18 L20 4 L11 13Z" fill="#f0f0f0" stroke="#f0f0f0" stroke-width="1.5" stroke-linejoin="round"/></svg>
<div class="a t" style="left:902.00px;top:149.90px;font-size:20px;line-height:22.34px;color:#cfcfcf;font-family:'Liberation Sans',sans-serif;letter-spacing:0.608px;">Previ</div>
<svg class="a" style="left:960px;top:155px;" width="10" height="10" viewBox="0 0 10 10"><path d="M1 1 L9 5 L1 9Z" fill="#7a7a7a"/></svg>
<div class="a" style="left:3px;top:194px;width:981px;height:17px;background:linear-gradient(#5a5a5a,#474747);border-top:1px solid #6a6a6a;"></div>
<svg class="a" style="left:7px;top:198px;" width="10" height="9" viewBox="0 0 10 9"><path d="M1 1h8L5 8z" fill="#000"/></svg>
<div class="a" style="left:1px;top:212px;width:968px;height:854px;background:#000;border-top:1px solid #0a9a0a;border-left:1px solid #0a9a0a;border-bottom:1px solid #0a9a0a;"></div>
<div class="a" style="left:1px;top:211px;width:984px;height:1px;background:#0c0c0c;"></div>
<div class="a" style="left:967px;top:212px;width:17px;height:853px;background:linear-gradient(#565656,#4a4a4a 25%,#4a4a4a);border-left:1px solid #606060;border-top:1px solid #666;"></div>
<svg class="a" style="left:971px;top:218px;" width="9" height="9" viewBox="0 0 9 9"><path d="M8 1 L1 4.5 L8 8Z" fill="#000"/></svg>
<div class="a" style="left:27px;top:420px;width:942px;height:561px;border:1px solid #7a7a7a;border-right:none;"></div>
<svg class="a" style="left:0px;top:0px;" width="969" height="1066" viewBox="0 0 969 1066"><defs><filter id="blur" x="-5%" y="-5%" width="110%" height="110%"><feGaussianBlur stdDeviation="1.1"/></filter>
<clipPath id="cl"><rect x="28" y="421" width="940" height="559"/></clipPath></defs>
<g clip-path="url(#cl)"><g filter="url(#blur)"><polygon points="526.0,400.0 861.0,493.0 806.0,874.0 524.0,1087.0 243.0,874.0 188.0,493.0" fill="rgb(90,90,90)"/><polygon points="526.0,400.8 860.1,493.6 805.3,873.6 524.0,1086.0 243.7,873.6 188.9,493.6" fill="rgb(140,140,140)"/><polygon points="526.0,402.1 858.8,494.5 804.1,872.9 524.0,1084.5 244.9,872.9 190.2,494.5" fill="rgb(172,172,172)"/><polygon points="526.0,403.6 857.1,495.5 802.7,872.1 524.0,1082.6 246.3,872.1 191.9,495.6" fill="rgb(195,195,195)"/><polygon points="526.0,405.7 854.9,497.0 800.9,871.0 524.0,1080.1 248.1,871.0 194.1,497.0" fill="rgb(213,213,213)"/><polygon points="526.0,408.3 852.1,498.8 798.6,869.6 524.0,1077.0 250.4,869.6 196.9,498.8" fill="rgb(226,226,226)"/><polygon points="526.0,411.4 848.7,501.0 795.8,867.9 524.0,1073.2 253.2,868.0 200.3,501.0" fill="rgb(234,234,234)"/><polygon points="526.0,415.6 844.3,503.9 792.0,865.7 524.0,1068.2 257.0,865.8 204.7,504.0" fill="rgb(240,240,240)"/><polygon points="526.0,420.7 838.7,507.6 787.4,863.0 524.0,1061.9 261.6,863.0 210.3,507.6" fill="rgb(244,244,244)"/><polygon points="526.0,428.0 830.9,512.7 780.9,859.1 524.0,1053.1 268.1,859.2 218.1,512.7" fill="rgb(246,246,246)"/></g></g></svg>
<div class="a t" style="left:7.00px;top:221.54px;font-size:21.5px;line-height:24.02px;color:#4cf04c;font-family:'Liberation Sans',sans-serif;letter-spacing:1.129px;">/out/mantra_ipr(raytrace)-15:14:24[1]</div>
<div class="a t" style="left:7.00px;top:245.81px;font-size:19px;line-height:21.22px;color:#b0b0b0;font-family:'Liberation Sans',sans-serif;letter-spacing:1.218px;">1280x720</div>
<div class="a t" style="left:7.00px;top:267.81px;font-size:19px;line-height:21.22px;color:#b0b0b0;font-family:'Liberation Sans',sans-serif;letter-spacing:0.849px;">fr 1</div>
<div class="a t" style="left:7.00px;top:289.81px;font-size:19px;line-height:21.22px;color:#b0b0b0;font-family:'Liberation Sans',sans-serif;">C</div>
<div class="a t" style="left:730.00px;top:221.54px;font-size:21.5px;line-height:24.02px;color:#d8d8d8;font-family:'Liberation Sans',sans-serif;letter-spacing:0.855px;">Render Time: 0:00:07</div>
<div class="a t" style="left:734.00px;top:245.54px;font-size:21.5px;line-height:24.02px;color:#d8d8d8;font-family:'Liberation Sans',sans-serif;letter-spacing:0.749px;">Memory:   547.77 MB</div>
<div class="a t" style="left:756.00px;top:1037.85px;font-size:19.5px;line-height:21.78px;color:#bdbdbd;font-family:'Liberation Sans',sans-serif;letter-spacing:0.576px;">Non-Commercial Editio</div>
<div class="a" style="left:3px;top:1067px;width:981px;height:17px;background:linear-gradient(#5a5a5a,#474747);border-top:1px solid #6a6a6a;"></div>
<svg class="a" style="left:7px;top:1070px;" width="10" height="9" viewBox="0 0 10 9"><path d="M1 8 L5 1.5 L9 8 Z" fill="#000"/></svg>
<div class="a" style="left:3px;top:1085px;width:16px;height:49px;background:linear-gradient(90deg,#444,#555 40%,#3c3c3c);"></div>
<svg class="a" style="left:7px;top:1122px;" width="10" height="9" viewBox="0 0 10 9"><path d="M1 1h8L5 8z" fill="#000"/></svg>
<div class="a" style="left:20px;top:1085px;width:965px;height:49px;background:#2f2f2f;border-left:1px solid #555;border-top:1px solid #474747;"></div>
<div class="a" style="left:32px;top:1091px;width:185px;height:38px;background:#2a2a2a;border-radius:2px;"></div>
<div class="a" style="left:196px;top:1091px;width:21px;height:38px;background:#262626;"></div>
<svg class="a" style="left:202px;top:1100px;" width="10" height="18" viewBox="0 0 10 18"><path d="M1 7 L5 1 L9 7Z M1 11 L5 17 L9 11Z" fill="#555"/></svg>
<div class="a t" style="left:47.00px;top:1098.90px;font-size:20px;line-height:22.34px;color:#8a8a8a;font-family:'Liberation Sans',sans-serif;letter-spacing:0.365px;">Active Render</div>
<svg class="a" style="left:231px;top:1103px;" width="14" height="14" viewBox="0 0 14 14"><path d="M2 2L12 12M12 2L2 12" stroke="#bdbdbd" stroke-width="2.6"/></svg>
<div class="a" style="left:261px;top:1090px;width:5px;height:40px;background:#262626;"></div>
<div class="a" style="left:264px;top:1108px;width:135px;height:3px;background:#262626;"></div>
<svg class="a" style="left:408px;top:1102px;" width="22" height="16" viewBox="0 0 22 16"><path d="M2 8H20" stroke="#9a9a9a" stroke-width="3"/></svg>
<svg class="a" style="left:446px;top:1099px;" width="22" height="22" viewBox="0 0 22 22"><path d="M11 2V20M2 11H20" stroke="#bdbdbd" stroke-width="3"/></svg>
<svg class="a" style="left:529px;top:1097px;" width="30" height="26" viewBox="0 0 30 26"><rect x="2" y="7" width="25" height="17" rx="2" fill="#aaa" stroke="#333"/><rect x="9" y="3" width="10" height="5" fill="#999" stroke="#333"/><circle cx="14.5" cy="15" r="6" fill="#555" stroke="#222"/><circle cx="14.5" cy="15" r="3.5" fill="#7fa7c7"/></svg>
<div class="a" style="left:566px;top:1096px;width:89px;height:28px;background:#141414;"></div>
<div class="a t" style="left:569.00px;top:1101.17px;font-size:19px;line-height:21.53px;color:#ececec;font-family:'Liberation Mono',monospace;letter-spacing:-0.482px;">Snap 1</div>
<div class="a" style="left:712px;top:1092px;width:33px;height:36px;background:linear-gradient(#3d3d3d,#333);border:1px solid #222;"></div>
<svg class="a" style="left:716px;top:1097px;" width="26" height="26" viewBox="0 0 26 26"><rect x="2" y="2" width="20" height="20" fill="#f0f0f0" stroke="#333"/><path d="M6 6L18 18M18 6L6 18" stroke="#333" stroke-width="1.5"/><path d="M20 20L25 23L20 25Z" fill="#999"/></svg>
<div class="a" style="left:750px;top:1096px;width:100px;height:28px;background:#2a2a2a;"></div>
<div class="a t" style="left:756.00px;top:1102.01px;font-size:18px;line-height:20.39px;color:#555;font-family:'Liberation Mono',monospace;letter-spacing:0.298px;">0.5</div>
<div class="a" style="left:857px;top:1108px;width:115px;height:3px;background:#2a2a2a;"></div>
<div class="a" style="left:911px;top:1096px;width:4px;height:28px;background:#2a2a2a;"></div>
<div class="a" style="left:0px;top:1134px;width:986px;height:1px;background:#0c0c0c;"></div>
<div class="a" style="left:984px;top:98px;width:16px;height:1037px;background:#0c0c0c;"></div>
<div class="a" style="left:985px;top:127px;width:2px;height:1007px;background:#222;"></div>
<div class="a" style="left:988px;top:98px;width:11px;height:1037px;background:#494949;border-left:1px solid #3a3a3a;"></div>
<svg class="a" style="left:989px;top:555px;" width="9" height="12" viewBox="0 0 9 12"><path d="M7 1 L2 6 L7 11Z" fill="#777"/></svg>
<svg class="a" style="left:989px;top:665px;" width="9" height="12" viewBox="0 0 9 12"><path d="M2 1 L7 6 L2 11Z" fill="#777"/></svg>
<svg class="a" style="left:989px;top:598px;" width="9" height="40" viewBox="0 0 9 40"><rect x="2" y="1" width="1.5" height="1.5" fill="#777"/><rect x="5" y="1" width="1.5" height="1.5" fill="#777"/><rect x="2" y="4" width="1.5" height="1.5" fill="#777"/><rect x="5" y="4" width="1.5" height="1.5" fill="#777"/><rect x="2" y="7" width="1.5" height="1.5" fill="#777"/><rect x="5" y="7" width="1.5" height="1.5" fill="#777"/><rect x="2" y="10" width="1.5" height="1.5" fill="#777"/><rect x="5" y="10" width="1.5" height="1.5" fill="#777"/><rect x="2" y="13" width="1.5" height="1.5" fill="#777"/><rect x="5" y="13" width="1.5" height="1.5" fill="#777"/><rect x="2" y="16" width="1.5" height="1.5" fill="#777"/><rect x="5" y="16" width="1.5" height="1.5" fill="#777"/><rect x="2" y="19" width="1.5" height="1.5" fill="#777"/><rect x="5" y="19" width="1.5" height="1.5" fill="#777"/><rect x="2" y="22" width="1.5" height="1.5" fill="#777"/><rect x="5" y="22" width="1.5" height="1.5" fill="#777"/><rect x="2" y="25" width="1.5" height="1.5" fill="#777"/><rect x="5" y="25" width="1.5" height="1.5" fill="#777"/><rect x="2" y="28" width="1.5" height="1.5" fill="#777"/><rect x="5" y="28" width="1.5" height="1.5" fill="#777"/><rect x="2" y="31" width="1.5" height="1.5" fill="#777"/><rect x="5" y="31" width="1.5" height="1.5" fill="#777"/><rect x="2" y="34" width="1.5" height="1.5" fill="#777"/><rect x="5" y="34" width="1.5" height="1.5" fill="#777"/></svg>
<div class="a" style="left:1000px;top:98px;width:678px;height:29px;background:#1c1c1c;"></div>
<div class="a" style="left:1000px;top:99px;width:184px;height:27px;background:linear-gradient(#4a4a4a,#424242);"></div>
<div class="a t" style="left:1012.00px;top:104.88px;font-size:14.5px;line-height:16.20px;color:#c3c3c3;font-family:'Liberation Sans',sans-serif;letter-spacing:0.830px;font-style:italic;">sample_shader1</div>
<svg class="a" style="left:1161px;top:106px;" width="12" height="12" viewBox="0 0 12 12"><path d="M2 2L10 10M10 2L2 10" stroke="#e6e6e6" stroke-width="2.6"/></svg>
<div class="a" style="left:1184px;top:99px;width:129px;height:26px;background:linear-gradient(#303030,#2a2a2a);border-right:1px solid #222;"></div>
<div class="a t" style="left:1196.00px;top:104.88px;font-size:14.5px;line-height:16.20px;color:#c3c3c3;font-family:'Liberation Sans',sans-serif;letter-spacing:0.597px;">Take List</div>
<svg class="a" style="left:1293px;top:106px;" width="12" height="12" viewBox="0 0 12 12"><path d="M2 2L10 10M10 2L2 10" stroke="#e6e6e6" stroke-width="2.6"/></svg>
<div class="a" style="left:1316px;top:99px;width:216px;height:26px;background:linear-gradient(#303030,#2a2a2a);border-right:1px solid #222;"></div>
<div class="a t" style="left:1328.00px;top:104.88px;font-size:14.5px;line-height:16.20px;color:#c3c3c3;font-family:'Liberation Sans',sans-serif;letter-spacing:0.701px;">Performance Monitor</div>
<svg class="a" style="left:1512px;top:106px;" width="12" height="12" viewBox="0 0 12 12"><path d="M2 2L10 10M10 2L2 10" stroke="#e6e6e6" stroke-width="2.6"/></svg>
<div class="a" style="left:1535px;top:99px;width:143px;height:26px;background:#2a2a2a;"></div>
<svg class="a" style="left:1543px;top:104px;" width="15" height="15" viewBox="0 0 15 15"><path d="M7.5 1.5v12M1.5 7.5h12" stroke="#e8e8e8" stroke-width="2.6"/></svg>
<svg class="a" style="left:1637px;top:103px;" width="16" height="16" viewBox="0 0 16 16"><rect x="1" y="2" width="14" height="12" fill="#d8d8d8" stroke="#222" stroke-width="1"/><path d="M3 12 L13 4" stroke="#bbb"/></svg>
<svg class="a" style="left:1662px;top:107px;" width="12" height="9" viewBox="0 0 12 9"><path d="M1 1h10L6 8z" fill="#e0e0e0"/></svg>
<div class="a" style="left:1000px;top:126px;width:678px;height:1px;background:#0c0c0c;"></div>
<div class="a" style="left:1000px;top:127px;width:678px;height:689px;background:#3c3c3c;"></div>
<div class="a" style="left:1000px;top:127px;width:678px;height:46px;background:#3a3a3a;"></div>
<svg class="a" style="left:1005px;top:136px;" width="30" height="28" viewBox="0 0 30 28"><path d="M2 12 L12 2 V8 H25 V17 H12 V23Z" fill="#c8c8c8" stroke="#1c2030" stroke-width="1.5" stroke-linejoin="round"/><path d="M22 20 L28 24 L22 28Z" fill="#8a8a8a"/></svg>
<svg class="a" style="left:1043px;top:136px;" width="30" height="28" viewBox="0 0 30 28"><path d="M26 12 L16 2 V8 H3 V17 H16 V23Z" fill="#a8a8a8" stroke="#1c2030" stroke-width="1.5" stroke-linejoin="round"/><path d="M22 20 L28 24 L22 28Z" fill="#8a8a8a"/></svg>
<div class="a" style="left:1084px;top:128px;width:511px;height:42px;background:linear-gradient(#474747,#3d3d3d);border:1px solid #1c1c1c;"></div>
<div class="a" style="left:1573px;top:129px;width:21px;height:40px;background:linear-gradient(#3a3a3a,#2c2c2c);"></div>
<svg class="a" style="left:1579px;top:143px;" width="12" height="10" viewBox="0 0 12 10"><path d="M1 1h10L6 8z" fill="#7a7a7a"/></svg>
<svg class="a" style="left:1091.5px;top:130.5px;" width="35.0" height="37.0" viewBox="0 0 35.0 37.0"><defs><clipPath id="pc1108_147"><circle cx="16.5" cy="16.5" r="15.5"/></clipPath>
<radialGradient id="ps1108_147" cx=".35" cy=".3" r=".7"><stop offset="0" stop-color="#fff" stop-opacity=".55"/><stop offset=".5" stop-color="#fff" stop-opacity="0"/><stop offset="1" stop-color="#000" stop-opacity=".25"/></radialGradient></defs>
<ellipse cx="17.5" cy="33.0" rx="12.4" ry="2.5" fill="#111" opacity=".5"/>
<g clip-path="url(#pc1108_147)"><rect width="35.0" height="35.0" fill="#2c5aa8"/>
<path d="M-2 32 Q19 28 35 7 V-2 H-2Z" fill="#e4e4e4"/>
<path d="M-2 27 Q16 22.5 31 -2 H-2Z" fill="#d42222"/></g>
<circle cx="16.5" cy="16.5" r="15.5" fill="url(#ps1108_147)" stroke="#333" stroke-width="0.6"/></svg>
<div class="a t" style="left:1130.00px;top:134.90px;font-size:20px;line-height:22.34px;color:#d0d0d0;font-family:'Liberation Sans',sans-serif;letter-spacing:0.210px;">shop</div>
<svg class="a" style="left:1604px;top:135px;" width="30" height="28" viewBox="0 0 30 28"><ellipse cx="17" cy="24" rx="11" ry="2" fill="#2a2a2a" opacity=".7"/>
<path d="M1 13 L12 11.3 V14.7Z" fill="#f4f4f4" stroke="#000" stroke-width="1.3" stroke-linejoin="round"/>
<path d="M12 3 Q17 5 19 10 H25 V16 H19 Q17 21 12 23Z" fill="#d4d4d4" stroke="#000" stroke-width="1.4" stroke-linejoin="round"/>
<rect x="24.5" y="5" width="3.5" height="16" fill="#e8e8e8" stroke="#111" stroke-width="1.2"/></svg>
<svg class="a" style="left:1642px;top:133px;" width="30" height="30" viewBox="0 0 30 30"><circle cx="15" cy="15" r="13" fill="none" stroke="#6a90c8" stroke-width="2"/><circle cx="15" cy="15" r="9" fill="none" stroke="#5a80b8" stroke-width="1.5"/><circle cx="15" cy="15" r="3.6" fill="#4a7ad0"/></svg>
<div class="a" style="left:1000px;top:173px;width:678px;height:2px;background:#222;"></div>
<svg class="a" style="left:1008px;top:179px;" width="33" height="33" viewBox="0 0 33 33"><g transform="scale(1.0)"><path d="M2 7 L14 1.5 L27 6 L14 12Z" fill="#f2a62a"/>
<path d="M2 7 L14 12 L14 29 L3 22Z" fill="#e8901a"/>
<path d="M14 12 L27 6 L26 22 L14 29Z" fill="#e0680e"/>
<g stroke="#0a0a0a" stroke-width="2.1" fill="none" stroke-linecap="round">
<path d="M5 9 Q6 15 5 21 M8 10 Q9 17 7 24 M11 12 Q12 19 10 26 M17 12 Q16 18 18 27 M20 10 Q19 16 21 25 M23 9 Q22 15 24 22"/>
<path d="M6 6 L16 10 M9 4.5 L19 9 M12 3 L22 7.5"/></g>
<path d="M2 7 L14 1.5 L27 6 L26 22 L14 29 L3 22Z" fill="none" stroke="#3a1a00" stroke-width=".8"/><path d="M23 27 L31 27 L27 31.5Z" fill="#8a8a8a"/></g></svg>
<div class="a t" style="left:1042.00px;top:183.90px;font-size:20px;line-height:22.34px;color:#d4d4d4;font-family:'Liberation Sans',sans-serif;letter-spacing:1.041px;font-weight:bold;">Sample Shader</div>
<div class="a" style="left:1207px;top:181px;width:323px;height:28px;background:#131313;border:1px solid #333;"></div>
<div class="a t" style="left:1211.00px;top:186.34px;font-size:20px;line-height:22.66px;color:#ececec;font-family:'Liberation Mono',monospace;letter-spacing:-1.079px;">sample_shader1</div>
<svg class="a" style="left:1533px;top:179px;" width="32" height="32" viewBox="0 0 32 32"><rect x="12" y="2" width="6" height="13" rx="2.6" fill="#e8e8e8" stroke="#222" stroke-width=".8" transform="rotate(0 15 15)"/><rect x="12" y="2" width="6" height="13" rx="2.6" fill="#e8e8e8" stroke="#222" stroke-width=".8" transform="rotate(45 15 15)"/><rect x="12" y="2" width="6" height="13" rx="2.6" fill="#e8e8e8" stroke="#222" stroke-width=".8" transform="rotate(90 15 15)"/><rect x="12" y="2" width="6" height="13" rx="2.6" fill="#e8e8e8" stroke="#222" stroke-width=".8" transform="rotate(135 15 15)"/><rect x="12" y="2" width="6" height="13" rx="2.6" fill="#e8e8e8" stroke="#222" stroke-width=".8" transform="rotate(180 15 15)"/><rect x="12" y="2" width="6" height="13" rx="2.6" fill="#e8e8e8" stroke="#222" stroke-width=".8" transform="rotate(225 15 15)"/><rect x="12" y="2" width="6" height="13" rx="2.6" fill="#e8e8e8" stroke="#222" stroke-width=".8" transform="rotate(270 15 15)"/><rect x="12" y="2" width="6" height="13" rx="2.6" fill="#e8e8e8" stroke="#222" stroke-width=".8" transform="rotate(315 15 15)"/><circle cx="15" cy="15" r="8.06" fill="#e8e8e8"/><rect x="12.8" y="2.8" width="4.4" height="12" rx="2" fill="#e8e8e8" transform="rotate(0 15 15)"/><rect x="12.8" y="2.8" width="4.4" height="12" rx="2" fill="#e8e8e8" transform="rotate(45 15 15)"/><rect x="12.8" y="2.8" width="4.4" height="12" rx="2" fill="#e8e8e8" transform="rotate(90 15 15)"/><rect x="12.8" y="2.8" width="4.4" height="12" rx="2" fill="#e8e8e8" transform="rotate(135 15 15)"/><rect x="12.8" y="2.8" width="4.4" height="12" rx="2" fill="#e8e8e8" transform="rotate(180 15 15)"/><rect x="12.8" y="2.8" width="4.4" height="12" rx="2" fill="#e8e8e8" transform="rotate(225 15 15)"/><rect x="12.8" y="2.8" width="4.4" height="12" rx="2" fill="#e8e8e8" transform="rotate(270 15 15)"/><rect x="12.8" y="2.8" width="4.4" height="12" rx="2" fill="#e8e8e8" transform="rotate(315 15 15)"/><circle cx="15" cy="15" r="3.9" fill="#333"/><path d="M22 26 L28 26 L25 30Z" fill="#8a8a8a"/></svg>
<svg class="a" style="left:1572px;top:180px;" width="30" height="32" viewBox="0 0 30 32"><text x="1" y="25" font-family="Liberation Sans" font-weight="bold" font-style="italic" font-size="29" fill="#0c1a3a" stroke="#e8e8e8" stroke-width="1.3">H</text><path d="M20 26 L26 26 L23 30Z" fill="#8a8a8a"/></svg>
<svg class="a" style="left:1607px;top:179px;" width="28" height="28" viewBox="0 0 28 28"><circle cx="14" cy="14" r="12" fill="#2b2f33" stroke="#e8e8e8" stroke-width="2"/><text x="14" y="21" text-anchor="middle" font-family="Liberation Serif" font-weight="bold" font-style="italic" font-size="19" fill="#f0f0f0">i</text></svg>
<svg class="a" style="left:1643px;top:179px;" width="28" height="28" viewBox="0 0 28 28"><circle cx="14" cy="14" r="12" fill="#2b2f33" stroke="#e8e8e8" stroke-width="2"/><text x="14" y="21" text-anchor="middle" font-family="Liberation Sans" font-weight="bold" font-style="normal" font-size="19" fill="#f0f0f0">?</text></svg>
<div class="a" style="left:1004px;top:213px;width:672px;height:2px;background:#141414;"></div>
<div class="a" style="left:1651px;top:215px;width:25px;height:244px;background:linear-gradient(90deg,#5a5a5a,#4b4b4b 60%,#444);border-top:1px solid #666;"></div>
<svg class="a" style="left:1657px;top:330px;" width="10" height="12" viewBox="0 0 10 12"><rect x="0" y="0" width="2" height="2" fill="#111"/><rect x="3" y="0" width="2" height="2" fill="#111"/><rect x="6" y="0" width="2" height="2" fill="#111"/><rect x="0" y="3" width="2" height="2" fill="#111"/><rect x="3" y="3" width="2" height="2" fill="#111"/><rect x="6" y="3" width="2" height="2" fill="#111"/><rect x="0" y="6" width="2" height="2" fill="#111"/><rect x="3" y="6" width="2" height="2" fill="#111"/><rect x="6" y="6" width="2" height="2" fill="#111"/><rect x="0" y="9" width="2" height="2" fill="#111"/><rect x="3" y="9" width="2" height="2" fill="#111"/><rect x="6" y="9" width="2" height="2" fill="#111"/></svg>
<div class="a" style="left:1651px;top:459px;width:25px;height:292px;background:#262626;border-left:1px solid #333;"></div>
<div class="a" style="left:1651px;top:751px;width:25px;height:33px;background:linear-gradient(90deg,#3a3a3a,#444);"></div>
<svg class="a" style="left:1658px;top:762px;" width="10" height="9" viewBox="0 0 10 9"><path d="M1 8 L5 1.5 L9 8 Z" fill="#4c4c4c"/></svg>
<div class="a" style="left:1651px;top:784px;width:25px;height:32px;background:linear-gradient(90deg,#4a4a4a,#555);border-top:1px solid #2a2a2a;"></div>
<svg class="a" style="left:1658px;top:795px;" width="10" height="9" viewBox="0 0 10 9"><path d="M1 1h8L5 8z" fill="#777"/></svg>
<div class="a t" style="left:1073.00px;top:228.90px;font-size:20px;line-height:22.34px;color:#c4c4c4;font-family:'Liberation Sans',sans-serif;letter-spacing:0.444px;">Smoke Intensity</div>
<div class="a" style="left:1243px;top:221px;width:111px;height:37px;background:#131313;border:1px solid #2c2c2c;"></div>
<div class="a t" style="left:1247.00px;top:229.84px;font-size:20px;line-height:22.66px;color:#f0f0f0;font-family:'Liberation Mono',monospace;font-weight:bold;">0</div>
<div class="a" style="left:1364px;top:237.0px;width:283px;height:5px;background:#555;border:1px solid #222;border-radius:2px;"></div>
<div class="a" style="left:1356px;top:220.5px;width:8px;height:38px;background:linear-gradient(90deg,#5a5a5a,#444);border:1px solid #1c1c1c;border-radius:2px;"></div>
<div class="a" style="left:1242px;top:264px;width:23px;height:23px;background:#1a1a1a;border:1px solid #2e2e2e;"></div>
<div class="a t" style="left:1277.50px;top:264.40px;font-size:20px;line-height:22.34px;color:#c8c8c8;font-family:'Liberation Sans',sans-serif;letter-spacing:-0.543px;font-weight:bold;">Use Smoke Color</div>
<div class="a t" style="left:1105.50px;top:302.90px;font-size:20px;line-height:22.34px;color:#c4c4c4;font-family:'Liberation Sans',sans-serif;letter-spacing:0.040px;">Smoke Color</div>
<div class="a" style="left:1245px;top:294px;width:78px;height:38px;background:#000;border:2px solid #2e2e2e;border-radius:2px;box-shadow:0 0 0 1px #555;"></div>
<svg class="a" style="left:1331px;top:298px;" width="30" height="30" viewBox="0 0 30 30"><defs><radialGradient id="cw" cx=".4" cy=".35" r=".6"><stop offset="0" stop-color="#fff"/><stop offset="1" stop-color="#fff" stop-opacity="0"/></radialGradient></defs>
<circle cx="13" cy="13" r="11" fill="#c070d0"/><path d="M13 13 L13 2 A11 11 0 0 1 24 13Z" fill="#f0a050"/><path d="M13 13 L24 13 A11 11 0 0 1 13 24Z" fill="#60d090"/><path d="M13 13 L13 24 A11 11 0 0 1 2 13Z" fill="#70c0f0"/>
<circle cx="13" cy="13" r="11" fill="url(#cw)" stroke="#222" stroke-width="1.2"/><path d="M23 22 L28 25 L23 28Z" fill="#888"/></svg>
<div class="a" style="left:1365px;top:294px;width:93px;height:41px;background:#131313;border:1px solid #2c2c2c;"></div>
<div class="a t" style="left:1369.00px;top:304.84px;font-size:20px;line-height:22.66px;color:#f0f0f0;font-family:'Liberation Mono',monospace;font-weight:bold;">0</div>
<div class="a" style="left:1461px;top:294px;width:93px;height:41px;background:#131313;border:1px solid #2c2c2c;"></div>
<div class="a t" style="left:1465.00px;top:304.84px;font-size:20px;line-height:22.66px;color:#f0f0f0;font-family:'Liberation Mono',monospace;font-weight:bold;">0</div>
<div class="a" style="left:1557px;top:294px;width:93px;height:41px;background:#131313;border:1px solid #2c2c2c;"></div>
<div class="a t" style="left:1561.00px;top:304.84px;font-size:20px;line-height:22.66px;color:#f0f0f0;font-family:'Liberation Mono',monospace;font-weight:bold;">0</div>
<div class="a" style="left:1242px;top:340px;width:23px;height:23px;background:#1a1a1a;border:1px solid #2e2e2e;"></div>
<div class="a t" style="left:1277.50px;top:341.40px;font-size:20px;line-height:22.34px;color:#c8c8c8;font-family:'Liberation Sans',sans-serif;letter-spacing:-0.287px;font-weight:bold;">Use Point Color</div>
<div class="a t" style="left:1083.50px;top:377.90px;font-size:20px;line-height:22.34px;color:#c4c4c4;font-family:'Liberation Sans',sans-serif;letter-spacing:0.211px;">Min Data Value</div>
<div class="a" style="left:1243px;top:370px;width:111px;height:38px;background:#131313;border:1px solid #2c2c2c;"></div>
<div class="a t" style="left:1247.00px;top:379.34px;font-size:20px;line-height:22.66px;color:#f0f0f0;font-family:'Liberation Mono',monospace;font-weight:bold;">0</div>
<div class="a" style="left:1364px;top:386.0px;width:283px;height:5px;background:#555;border:1px solid #222;border-radius:2px;"></div>
<div class="a" style="left:1356px;top:369.5px;width:8px;height:38px;background:linear-gradient(90deg,#5a5a5a,#444);border:1px solid #1c1c1c;border-radius:2px;"></div>
<div class="a t" style="left:1076.50px;top:419.90px;font-size:20px;line-height:22.34px;color:#c4c4c4;font-family:'Liberation Sans',sans-serif;letter-spacing:0.322px;">Max Data Value</div>
<div class="a" style="left:1243px;top:412px;width:111px;height:37px;background:#131313;border:1px solid #2c2c2c;"></div>
<div class="a t" style="left:1247.00px;top:420.84px;font-size:20px;line-height:22.66px;color:#f0f0f0;font-family:'Liberation Mono',monospace;font-weight:bold;">1</div>
<div class="a" style="left:1361px;top:428.0px;width:279px;height:5px;background:#555;border:1px solid #222;border-radius:2px;"></div>
<div class="a" style="left:1361px;top:428.0px;width:279px;height:5px;background:#1d4f94;border:1px solid #111;border-radius:2px;"></div>
<div class="a" style="left:1640px;top:411.5px;width:8px;height:38px;background:linear-gradient(90deg,#5a5a5a,#444);border:1px solid #1c1c1c;border-radius:2px;"></div>
<div class="a t" style="left:1036.00px;top:461.90px;font-size:20px;line-height:22.34px;color:#c4c4c4;font-family:'Liberation Sans',sans-serif;letter-spacing:0.247px;">Falloff Distance Max</div>
<div class="a" style="left:1243px;top:454px;width:111px;height:37px;background:#131313;border:1px solid #2c2c2c;"></div>
<div class="a t" style="left:1247.00px;top:462.84px;font-size:20px;line-height:22.66px;color:#f0f0f0;font-family:'Liberation Mono',monospace;letter-spacing:-1.002px;">1.5</div>
<div class="a" style="left:1361px;top:470.0px;width:279px;height:5px;background:#555;border:1px solid #222;border-radius:2px;"></div>
<div class="a" style="left:1361px;top:470.0px;width:279px;height:5px;background:#1d4f94;border:1px solid #111;border-radius:2px;"></div>
<div class="a" style="left:1640px;top:453.5px;width:8px;height:38px;background:linear-gradient(90deg,#5a5a5a,#444);border:1px solid #1c1c1c;border-radius:2px;"></div>
<div class="a" style="left:1004px;top:526px;width:647px;height:290px;background:#3a3a3a;border-left:1px solid #050505;"></div>
<div class="a" style="left:1101px;top:495px;width:78px;height:32px;background:linear-gradient(#525252,#363636);border:1px solid #050505;"></div>
<div class="a t" style="left:1114.00px;top:501.40px;font-size:20px;line-height:22.34px;color:#c8c8c8;font-family:'Liberation Sans',sans-serif;letter-spacing:-0.034px;">Noise</div>
<div class="a" style="left:1178px;top:495px;width:146px;height:32px;background:linear-gradient(#525252,#363636);border:1px solid #050505;"></div>
<div class="a t" style="left:1191.50px;top:501.40px;font-size:20px;line-height:22.34px;color:#c8c8c8;font-family:'Liberation Sans',sans-serif;letter-spacing:0.572px;">Temperature</div>
<div class="a" style="left:1323px;top:495px;width:102px;height:32px;background:linear-gradient(#525252,#363636);border:1px solid #050505;"></div>
<div class="a t" style="left:1336.50px;top:501.40px;font-size:20px;line-height:22.34px;color:#c8c8c8;font-family:'Liberation Sans',sans-serif;letter-spacing:-0.321px;">OpenGL</div>
<div class="a" style="left:1004px;top:495px;width:97px;height:32px;background:linear-gradient(#565656,#3e3e3e);border:1px solid #050505;border-bottom:none;"></div>
<div class="a t" style="left:1017.50px;top:501.40px;font-size:20px;line-height:22.34px;color:#c8c8c8;font-family:'Liberation Sans',sans-serif;letter-spacing:0.385px;">Density</div>
<div class="a" style="left:1005px;top:526px;width:645px;height:1px;background:#585858;"></div>
<div class="a" style="left:1005px;top:527px;width:1px;height:289px;background:#505050;"></div>
<div class="a t" style="left:1113.00px;top:542.90px;font-size:20px;line-height:22.34px;color:#c4c4c4;font-family:'Liberation Sans',sans-serif;letter-spacing:0.200px;">Density Field</div>
<div class="a" style="left:1252px;top:539px;width:352px;height:30px;background:#131313;border:1px solid #2c2c2c;"></div>
<div class="a t" style="left:1256.00px;top:544.34px;font-size:20px;line-height:22.66px;color:#f0f0f0;font-family:'Liberation Mono',monospace;letter-spacing:-1.002px;">density</div>
<div class="a" style="left:1605px;top:535px;width:35px;height:35px;background:linear-gradient(#484848,#383838);border:1px solid #222;border-radius:2px;"></div>
<svg class="a" style="left:1617px;top:547px;" width="12" height="10" viewBox="0 0 12 10"><path d="M1 1h10L6 8z" fill="#888"/></svg>
<div class="a t" style="left:1091.00px;top:585.90px;font-size:20px;line-height:22.34px;color:#c4c4c4;font-family:'Liberation Sans',sans-serif;letter-spacing:0.459px;">Smoke Density</div>
<div class="a" style="left:1252px;top:578px;width:109px;height:38px;background:#131313;border:1px solid #2c2c2c;"></div>
<div class="a t" style="left:1256.00px;top:587.34px;font-size:20px;line-height:22.66px;color:#f0f0f0;font-family:'Liberation Mono',monospace;">1</div>
<div class="a" style="left:1367px;top:594.0px;width:273px;height:5px;background:#555;border:1px solid #222;border-radius:2px;"></div>
<div class="a" style="left:1367px;top:594.0px;width:25px;height:5px;background:#1d4f94;border:1px solid #111;border-radius:2px;"></div>
<div class="a" style="left:1391px;top:577.5px;width:8px;height:38px;background:linear-gradient(90deg,#5a5a5a,#444);border:1px solid #1c1c1c;border-radius:2px;"></div>
<div class="a t" style="left:1016.00px;top:628.90px;font-size:20px;line-height:22.34px;color:#c4c4c4;font-family:'Liberation Sans',sans-serif;letter-spacing:0.498px;">Shadow Density Mult...</div>
<div class="a" style="left:1252px;top:621px;width:109px;height:38px;background:#131313;border:1px solid #2c2c2c;"></div>
<div class="a t" style="left:1256.00px;top:630.34px;font-size:20px;line-height:22.66px;color:#f0f0f0;font-family:'Liberation Mono',monospace;">1</div>
<div class="a" style="left:1367px;top:637.0px;width:269px;height:5px;background:#555;border:1px solid #222;border-radius:2px;"></div>
<div class="a" style="left:1367px;top:637.0px;width:269px;height:5px;background:#1d4f94;border:1px solid #111;border-radius:2px;"></div>
<div class="a" style="left:1635px;top:620.5px;width:8px;height:38px;background:linear-gradient(90deg,#5a5a5a,#444);border:1px solid #1c1c1c;border-radius:2px;"></div>
<div class="a t" style="left:1021.00px;top:668.90px;font-size:20px;line-height:22.34px;color:#c4c4c4;font-family:'Liberation Sans',sans-serif;letter-spacing:0.309px;">Density Ramp</div>
<div class="a" style="left:1017px;top:693px;width:621px;height:123px;background:#3c3c3c;border-left:1px solid #262626;border-top:1px solid #262626;border-right:1px solid #262626;"></div>
<div class="a" style="left:1026px;top:700px;width:70px;height:36px;background:linear-gradient(#4a4a4a,#3a3a3a);border:1px solid #222;border-radius:2px;"></div>
<div class="a" style="left:1060px;top:701px;width:1px;height:34px;background:#222;"></div>
<svg class="a" style="left:1035px;top:709px;" width="18" height="18" viewBox="0 0 18 18"><path d="M4 4L14 14M14 4L4 14" stroke="#e0e0e0" stroke-width="3"/></svg>
<svg class="a" style="left:1064px;top:703px;" width="28" height="28" viewBox="0 0 28 28"><path d="M14 4V24M4 14H24" stroke="#1c1c30" stroke-width="6"/><path d="M14 5V23M5 14H23" stroke="#e0e0e0" stroke-width="3.5"/></svg>
<svg class="a" style="left:1029px;top:795px;" width="20" height="16" viewBox="0 0 20 16"><path d="M2 2H16L9 13Z" fill="#eee" stroke="#111" stroke-width="1"/></svg>
<svg class="a" style="left:1059px;top:795px;" width="20" height="17" viewBox="0 0 20 17"><rect x="1" y="1" width="17" height="14" fill="#111"/><rect x="3" y="3" width="13" height="10" fill="#eee"/><path d="M6 5H13L9.5 12Z" fill="#111"/></svg>
<svg class="a" style="left:1100px;top:690px;" width="540" height="127" viewBox="0 0 540 127"><rect x="13.5" y="10.5" width="505" height="88" fill="#262626"/>
<path d="M13.5 10.5 V98 M13.5 10.5 H517" stroke="#f0f0f0" stroke-width="1.5" fill="none"/>
<path d="M14 97.5 L517 11.5 V98.5 H14Z" fill="#a6a6a6"/>
<path d="M2 126 V110 L9 103 H19 L26 110 V126" fill="#3d3d3d" stroke="#111" stroke-width="1.5"/>
<circle cx="14" cy="97" r="5.5" fill="#050505"/>
<path d="M506 126 V104 L517 93 L528 104 V126Z" fill="#3d3d3d" stroke="#000" stroke-width="2.5"/>
<circle cx="517" cy="11.5" r="5.5" fill="#c88a20" stroke="#111" stroke-width="1.2"/></svg>
<div class="a" style="left:1000px;top:816px;width:651px;height:3px;background:#3a3a3a;"></div>
<div class="a" style="left:1000px;top:819px;width:678px;height:12px;background:linear-gradient(#4e4e4e,#484848);border-top:1px solid #7a7a7a;"></div>
<svg class="a" style="left:1279px;top:820px;" width="12" height="8" viewBox="0 0 12 8"><path d="M1 7 L6 2 L11 7Z" fill="#777"/></svg>
<svg class="a" style="left:1387px;top:822px;" width="12" height="8" viewBox="0 0 12 8"><path d="M1 1 H11 L6 6Z" fill="#777"/></svg>
<svg class="a" style="left:1322px;top:821px;" width="40" height="7" viewBox="0 0 40 7"><rect x="0" y="0" width="1.5" height="1.5" fill="#888"/><rect x="3" y="0" width="1.5" height="1.5" fill="#888"/><rect x="6" y="0" width="1.5" height="1.5" fill="#888"/><rect x="9" y="0" width="1.5" height="1.5" fill="#888"/><rect x="12" y="0" width="1.5" height="1.5" fill="#888"/><rect x="15" y="0" width="1.5" height="1.5" fill="#888"/><rect x="18" y="0" width="1.5" height="1.5" fill="#888"/><rect x="21" y="0" width="1.5" height="1.5" fill="#888"/><rect x="24" y="0" width="1.5" height="1.5" fill="#888"/><rect x="27" y="0" width="1.5" height="1.5" fill="#888"/><rect x="30" y="0" width="1.5" height="1.5" fill="#888"/><rect x="33" y="0" width="1.5" height="1.5" fill="#888"/><rect x="0" y="3" width="1.5" height="1.5" fill="#888"/><rect x="3" y="3" width="1.5" height="1.5" fill="#888"/><rect x="6" y="3" width="1.5" height="1.5" fill="#888"/><rect x="9" y="3" width="1.5" height="1.5" fill="#888"/><rect x="12" y="3" width="1.5" height="1.5" fill="#888"/><rect x="15" y="3" width="1.5" height="1.5" fill="#888"/><rect x="18" y="3" width="1.5" height="1.5" fill="#888"/><rect x="21" y="3" width="1.5" height="1.5" fill="#888"/><rect x="24" y="3" width="1.5" height="1.5" fill="#888"/><rect x="27" y="3" width="1.5" height="1.5" fill="#888"/><rect x="30" y="3" width="1.5" height="1.5" fill="#888"/><rect x="33" y="3" width="1.5" height="1.5" fill="#888"/></svg>
<div class="a" style="left:1000px;top:831px;width:678px;height:1px;background:#1a1a1a;"></div>
<div class="a" style="left:1000px;top:831px;width:678px;height:28px;background:#1c1c1c;"></div>
<div class="a" style="left:1000px;top:832px;width:108px;height:27px;background:linear-gradient(#4a4a4a,#424242);"></div>
<div class="a t" style="left:1012.00px;top:838.38px;font-size:14.5px;line-height:16.20px;color:#c3c3c3;font-family:'Liberation Sans',sans-serif;letter-spacing:1.132px;font-style:italic;">/shop</div>
<svg class="a" style="left:1085px;top:839px;" width="12" height="12" viewBox="0 0 12 12"><path d="M2 2L10 10M10 2L2 10" stroke="#e6e6e6" stroke-width="2.6"/></svg>
<div class="a" style="left:1108px;top:832px;width:132px;height:26px;background:linear-gradient(#303030,#2a2a2a);border-right:1px solid #222;"></div>
<div class="a t" style="left:1120.00px;top:838.38px;font-size:14.5px;line-height:16.20px;color:#c3c3c3;font-family:'Liberation Sans',sans-serif;letter-spacing:0.441px;">Tree View</div>
<svg class="a" style="left:1220px;top:839px;" width="12" height="12" viewBox="0 0 12 12"><path d="M2 2L10 10M10 2L2 10" stroke="#e6e6e6" stroke-width="2.6"/></svg>
<div class="a" style="left:1243px;top:832px;width:179px;height:26px;background:linear-gradient(#303030,#2a2a2a);border-right:1px solid #222;"></div>
<div class="a t" style="left:1255.00px;top:838.38px;font-size:14.5px;line-height:16.20px;color:#c3c3c3;font-family:'Liberation Sans',sans-serif;letter-spacing:0.950px;">Material Palette</div>
<svg class="a" style="left:1402px;top:839px;" width="12" height="12" viewBox="0 0 12 12"><path d="M2 2L10 10M10 2L2 10" stroke="#e6e6e6" stroke-width="2.6"/></svg>
<div class="a" style="left:1425px;top:832px;width:165px;height:26px;background:linear-gradient(#303030,#2a2a2a);border-right:1px solid #222;"></div>
<div class="a t" style="left:1437.00px;top:838.38px;font-size:14.5px;line-height:16.20px;color:#c3c3c3;font-family:'Liberation Sans',sans-serif;letter-spacing:0.794px;">Asset Browser</div>
<svg class="a" style="left:1570px;top:839px;" width="12" height="12" viewBox="0 0 12 12"><path d="M2 2L10 10M10 2L2 10" stroke="#e6e6e6" stroke-width="2.6"/></svg>
<div class="a" style="left:1593px;top:832px;width:85px;height:26px;background:#2a2a2a;"></div>
<svg class="a" style="left:1603px;top:837px;" width="15" height="15" viewBox="0 0 15 15"><path d="M7.5 1.5v12M1.5 7.5h12" stroke="#e8e8e8" stroke-width="2.6"/></svg>
<svg class="a" style="left:1637px;top:836px;" width="16" height="16" viewBox="0 0 16 16"><rect x="1" y="2" width="14" height="12" fill="#d8d8d8" stroke="#222" stroke-width="1"/><path d="M3 12 L13 4" stroke="#bbb"/></svg>
<svg class="a" style="left:1662px;top:840px;" width="12" height="9" viewBox="0 0 12 9"><path d="M1 1h10L6 8z" fill="#e0e0e0"/></svg>
<div class="a" style="left:1000px;top:858px;width:678px;height:1px;background:#141414;"></div>
<div class="a" style="left:1000px;top:859px;width:678px;height:48px;background:#3a3a3a;"></div>
<svg class="a" style="left:1005px;top:869px;" width="30" height="28" viewBox="0 0 30 28"><path d="M2 12 L12 2 V8 H25 V17 H12 V23Z" fill="#c8c8c8" stroke="#1c2030" stroke-width="1.5" stroke-linejoin="round"/><path d="M22 20 L28 24 L22 28Z" fill="#8a8a8a"/></svg>
<svg class="a" style="left:1043px;top:869px;" width="30" height="28" viewBox="0 0 30 28"><path d="M26 12 L16 2 V8 H3 V17 H16 V23Z" fill="#a8a8a8" stroke="#1c2030" stroke-width="1.5" stroke-linejoin="round"/><path d="M22 20 L28 24 L22 28Z" fill="#8a8a8a"/></svg>
<div class="a" style="left:1084px;top:861px;width:456px;height:41px;background:linear-gradient(#474747,#3d3d3d);border:1px solid #1c1c1c;"></div>
<div class="a" style="left:1521px;top:862px;width:18px;height:39px;background:linear-gradient(#3a3a3a,#2c2c2c);"></div>
<svg class="a" style="left:1525px;top:876px;" width="12" height="10" viewBox="0 0 12 10"><path d="M1 1h10L6 8z" fill="#7a7a7a"/></svg>
<svg class="a" style="left:1091.5px;top:863.5px;" width="35.0" height="37.0" viewBox="0 0 35.0 37.0"><defs><clipPath id="pc1108_880"><circle cx="16.5" cy="16.5" r="15.5"/></clipPath>
<radialGradient id="ps1108_880" cx=".35" cy=".3" r=".7"><stop offset="0" stop-color="#fff" stop-opacity=".55"/><stop offset=".5" stop-color="#fff" stop-opacity="0"/><stop offset="1" stop-color="#000" stop-opacity=".25"/></radialGradient></defs>
<ellipse cx="17.5" cy="33.0" rx="12.4" ry="2.5" fill="#111" opacity=".5"/>
<g clip-path="url(#pc1108_880)"><rect width="35.0" height="35.0" fill="#2c5aa8"/>
<path d="M-2 32 Q19 28 35 7 V-2 H-2Z" fill="#e4e4e4"/>
<path d="M-2 27 Q16 22.5 31 -2 H-2Z" fill="#d42222"/></g>
<circle cx="16.5" cy="16.5" r="15.5" fill="url(#ps1108_880)" stroke="#333" stroke-width="0.6"/></svg>
<div class="a t" style="left:1130.00px;top:867.90px;font-size:20px;line-height:22.34px;color:#d0d0d0;font-family:'Liberation Sans',sans-serif;letter-spacing:0.210px;">shop</div>
<svg class="a" style="left:1553px;top:868px;" width="30" height="28" viewBox="0 0 30 28"><ellipse cx="17" cy="24" rx="11" ry="2" fill="#2a2a2a" opacity=".7"/>
<path d="M1 13 L12 11.3 V14.7Z" fill="#f4f4f4" stroke="#000" stroke-width="1.3" stroke-linejoin="round"/>
<path d="M12 3 Q17 5 19 10 H25 V16 H19 Q17 21 12 23Z" fill="#d4d4d4" stroke="#000" stroke-width="1.4" stroke-linejoin="round"/>
<rect x="24.5" y="5" width="3.5" height="16" fill="#e8e8e8" stroke="#111" stroke-width="1.2"/></svg>
<svg class="a" style="left:1589px;top:867px;" width="30" height="30" viewBox="0 0 30 30"><circle cx="15" cy="15" r="13" fill="none" stroke="#6a90c8" stroke-width="2"/><circle cx="15" cy="15" r="9" fill="none" stroke="#5a80b8" stroke-width="1.5"/><circle cx="15" cy="15" r="3.6" fill="#4a7ad0"/></svg>
<svg class="a" style="left:1640px;top:866px;" width="34" height="34" viewBox="0 0 34 34"><rect x="13" y="3" width="6" height="13" rx="2.6" fill="#e8e8e8" stroke="#222" stroke-width=".8" transform="rotate(0 16 16)"/><rect x="13" y="3" width="6" height="13" rx="2.6" fill="#e8e8e8" stroke="#222" stroke-width=".8" transform="rotate(45 16 16)"/><rect x="13" y="3" width="6" height="13" rx="2.6" fill="#e8e8e8" stroke="#222" stroke-width=".8" transform="rotate(90 16 16)"/><rect x="13" y="3" width="6" height="13" rx="2.6" fill="#e8e8e8" stroke="#222" stroke-width=".8" transform="rotate(135 16 16)"/><rect x="13" y="3" width="6" height="13" rx="2.6" fill="#e8e8e8" stroke="#222" stroke-width=".8" transform="rotate(180 16 16)"/><rect x="13" y="3" width="6" height="13" rx="2.6" fill="#e8e8e8" stroke="#222" stroke-width=".8" transform="rotate(225 16 16)"/><rect x="13" y="3" width="6" height="13" rx="2.6" fill="#e8e8e8" stroke="#222" stroke-width=".8" transform="rotate(270 16 16)"/><rect x="13" y="3" width="6" height="13" rx="2.6" fill="#e8e8e8" stroke="#222" stroke-width=".8" transform="rotate(315 16 16)"/><circle cx="16" cy="16" r="8.06" fill="#e8e8e8"/><rect x="13.8" y="3.8" width="4.4" height="12" rx="2" fill="#e8e8e8" transform="rotate(0 16 16)"/><rect x="13.8" y="3.8" width="4.4" height="12" rx="2" fill="#e8e8e8" transform="rotate(45 16 16)"/><rect x="13.8" y="3.8" width="4.4" height="12" rx="2" fill="#e8e8e8" transform="rotate(90 16 16)"/><rect x="13.8" y="3.8" width="4.4" height="12" rx="2" fill="#e8e8e8" transform="rotate(135 16 16)"/><rect x="13.8" y="3.8" width="4.4" height="12" rx="2" fill="#e8e8e8" transform="rotate(180 16 16)"/><rect x="13.8" y="3.8" width="4.4" height="12" rx="2" fill="#e8e8e8" transform="rotate(225 16 16)"/><rect x="13.8" y="3.8" width="4.4" height="12" rx="2" fill="#e8e8e8" transform="rotate(270 16 16)"/><rect x="13.8" y="3.8" width="4.4" height="12" rx="2" fill="#e8e8e8" transform="rotate(315 16 16)"/><circle cx="16" cy="16" r="3.9" fill="#333"/><path d="M25 28 L32 28 L28.5 32Z" fill="#8a8a8a"/></svg>
<div class="a" style="left:1000px;top:906px;width:678px;height:2px;background:#1a1a1a;"></div>
<div class="a" style="left:1002px;top:908px;width:16px;height:48px;background:linear-gradient(90deg,#444,#555 40%,#3c3c3c);"></div>
<svg class="a" style="left:1006px;top:912px;" width="10" height="9" viewBox="0 0 10 9"><path d="M1 8 L5 1.5 L9 8 Z" fill="#000"/></svg>
<div class="a" style="left:1019px;top:908px;width:658px;height:48px;background:#2f2f2f;border-left:1px solid #555;border-top:1px solid #474747;border-right:1px solid #1a1a1a;"></div>
<svg class="a" style="left:1034px;top:918px;" width="22" height="28" viewBox="0 0 22 28"><g stroke="#b8c8b0" stroke-width="1.5" fill="none"><path d="M4 3 V24 M4 11 H12 M4 17 H12 M4 23 H12"/></g><rect x="1" y="1" width="5" height="5" fill="#eee"/><rect x="12" y="8" width="6" height="5" fill="#ddd"/><rect x="12" y="14" width="6" height="5" fill="#b8c8b0"/><rect x="12" y="20" width="6" height="5" fill="#ddd"/></svg>
<svg class="a" style="left:1067px;top:917px;" width="26" height="30" viewBox="0 0 26 30"><rect x="1" y="1" width="23" height="27" fill="#e8e8e8" stroke="#222"/><rect x="2" y="5" width="21" height="4" fill="#b8cbb8"/><rect x="2" y="13" width="21" height="4" fill="#b8cbb8"/><rect x="2" y="21" width="21" height="4" fill="#b8cbb8"/></svg>
<svg class="a" style="left:1101px;top:917px;" width="30" height="30" viewBox="0 0 30 30"><rect x="1" y="1" width="28" height="28" fill="#999"/><rect x="1" y="1" width="28" height="5" fill="#777"/><rect x="1" y="11" width="16" height="18" fill="#eee" stroke="#222"/><path d="M4 15h3M9 15h5M4 19h3M9 19h5M4 23h3M9 23h5" stroke="#222" stroke-width="1.5"/></svg>
<svg class="a" style="left:1138px;top:918px;" width="27" height="27" viewBox="0 0 27 27"><rect x="1" y="1" width="25" height="25" fill="#eee" stroke="#222"/><rect x="3.0" y="3.0" width="6" height="6" fill="#d02020"/><rect x="10.5" y="3.0" width="6" height="6" fill="#f07010"/><rect x="18.0" y="3.0" width="6" height="6" fill="#f0c010"/><rect x="3.0" y="10.5" width="6" height="6" fill="#2050b0"/><rect x="10.5" y="10.5" width="6" height="6" fill="#30b030"/><rect x="18.0" y="10.5" width="6" height="6" fill="#60a0e0"/><rect x="3.0" y="18.0" width="6" height="6" fill="#111"/><rect x="10.5" y="18.0" width="6" height="6" fill="#888"/><rect x="18.0" y="18.0" width="6" height="6" fill="#c8d8c8"/></svg>
<svg class="a" style="left:1188px;top:918px;" width="27" height="28" viewBox="0 0 27 28"><rect x="1" y="1" width="25" height="26" fill="#aaa" stroke="#222"/><rect x="1" y="1" width="25" height="3" fill="#777"/><rect x="4" y="8" width="11" height="6" fill="#fff" stroke="#111"/><rect x="11" y="17" width="12" height="6" fill="#fff" stroke="#111"/></svg>
<svg class="a" style="left:1224px;top:917px;" width="28" height="28" viewBox="0 0 28 28"><path d="M1 1 H26 V18 L18 27 H1Z" fill="#e8d86a" stroke="#222"/><path d="M26 18 L18 18 L18 27Z" fill="#c8b44a"/><path d="M5 7h16M5 11h16M5 15h10" stroke="#111" stroke-width="2"/></svg>
<svg class="a" style="left:1260px;top:917px;" width="32" height="26" viewBox="0 0 32 26"><path d="M3 8 L16 3 L29 8 L16 13Z" fill="#e8a860"/><path d="M3 8 V20 L16 25 V13Z" fill="#c87a30"/><path d="M29 8 V20 L16 25 V13Z" fill="#d8904a"/><path d="M1 7 L8 2 L16 6 M31 7 L24 2 L16 6" stroke="#a86020" fill="#f0c080"/></svg>
<svg class="a" style="left:1369px;top:916px;" width="32" height="32" viewBox="0 0 32 32"><path d="M16 1 V31" stroke="#5a86c4" stroke-width="1.5"/><rect x="11" y="6" width="10" height="5" fill="#f0f0f0" stroke="#111" stroke-width="1"/><rect x="11" y="19" width="10" height="5" fill="#f0f0f0" stroke="#111" stroke-width="1"/></svg>
<svg class="a" style="left:1405px;top:916px;" width="32" height="32" viewBox="0 0 32 32"><path d="M1 16 H31" stroke="#5a86c4" stroke-width="1.5" stroke-dasharray="2 8"/><rect x="4" y="13" width="9" height="5" fill="#f0f0f0" stroke="#111" stroke-width="1"/><rect x="18" y="13" width="9" height="5" fill="#f0f0f0" stroke="#111" stroke-width="1"/></svg>
<svg class="a" style="left:1441px;top:916px;" width="32" height="32" viewBox="0 0 32 32"><path d="M15 1 V31 M18 1 V31" stroke="#5a86c4" stroke-width="1.5"/><rect x="4" y="6" width="8" height="5" fill="#f0f0f0" stroke="#111" stroke-width="1"/><rect x="20" y="20" width="8" height="5" fill="#f0f0f0" stroke="#111" stroke-width="1"/></svg>
<svg class="a" style="left:1477px;top:916px;" width="32" height="32" viewBox="0 0 32 32"><path d="M1 15 H30 M1 19 H30" stroke="#5a86c4" stroke-width="1.5"/><rect x="4" y="5" width="8" height="5" fill="#f0f0f0" stroke="#111" stroke-width="1"/><rect x="18" y="23" width="8" height="5" fill="#f0f0f0" stroke="#111" stroke-width="1"/></svg>
<svg class="a" style="left:1513px;top:916px;" width="32" height="32" viewBox="0 0 32 32"><path d="M6 1 V31 M18 1 V31 M1 8 H30 M1 20 H30" stroke="#5a86c4" stroke-width="1.5"/><rect x="3" y="6" width="8" height="5" fill="#f0f0f0" stroke="#111" stroke-width="1"/><rect x="19" y="20" width="8" height="5" fill="#f0f0f0" stroke="#111" stroke-width="1"/></svg>
<svg class="a" style="left:1549px;top:916px;" width="32" height="32" viewBox="0 0 32 32"><path d="M8 1 V31 M20 1 V31 M1 9 H30 M1 21 H30" stroke="#5a86c4" stroke-width="1.8"/></svg>
<svg class="a" style="left:1601px;top:917px;" width="32" height="30" viewBox="0 0 32 30"><circle cx="12" cy="12" r="9.5" fill="#4a5258" stroke="#d8d8d8" stroke-width="2.2"/><path d="M19 19 L28 27" stroke="#d8d8d8" stroke-width="3.5" stroke-linecap="round"/></svg>
<svg class="a" style="left:1638px;top:917px;" width="30" height="30" viewBox="0 0 30 30"><rect x="1" y="1" width="27" height="27" fill="#e8e8e8" stroke="#222"/><rect x="2" y="2" width="25" height="4" fill="#999"/><path d="M4 16 Q14 6 25 16 Q14 24 4 16Z" fill="#fff" stroke="#111" stroke-width="1.5"/><circle cx="14" cy="15" r="4" fill="#111"/><path d="M5 12 Q14 4 24 11" stroke="#2a3050" stroke-width="2" fill="none"/></svg>
<div class="a" style="left:1000px;top:956px;width:678px;height:1px;background:#1a1a1a;"></div>
<div class="a" style="left:1000px;top:957px;width:678px;height:178px;background:#2d2d2d;"></div>
<div class="a t" style="left:1563.00px;top:966.75px;font-size:29px;line-height:32.39px;color:#3b3b3b;font-family:'Liberation Sans',sans-serif;letter-spacing:-1.074px;font-weight:bold;">Shaders</div>
<div class="a t" style="left:1329.00px;top:1097.76px;font-size:29px;line-height:32.39px;color:#393939;font-family:'Liberation Sans',sans-serif;letter-spacing:0.173px;font-weight:bold;">Non-Commercial Edition</div>
<div class="a t" style="left:1247.50px;top:1008.57px;font-size:27px;line-height:30.16px;color:#5cc8f4;font-family:'Liberation Sans',sans-serif;letter-spacing:1.067px;">sample_shader1</div>
<div class="a" style="left:1242px;top:1038px;width:183px;height:62px;background:#f0b000;"></div>
<div class="a" style="left:1244px;top:1040px;width:179px;height:34px;background:repeating-linear-gradient(135deg,#111 0 2px,#f0c000 2px 4px);"></div>
<div class="a" style="left:1248px;top:1043px;width:171px;height:29px;background:linear-gradient(#d8d8d8,#a8a8a8);"></div>
<svg class="a" style="left:1251px;top:1046px;" width="33" height="33" viewBox="0 0 33 33"><g transform="scale(0.72)"><path d="M2 7 L14 1.5 L27 6 L14 12Z" fill="#f2a62a"/>
<path d="M2 7 L14 12 L14 29 L3 22Z" fill="#e8901a"/>
<path d="M14 12 L27 6 L26 22 L14 29Z" fill="#e0680e"/>
<g stroke="#0a0a0a" stroke-width="2.1" fill="none" stroke-linecap="round">
<path d="M5 9 Q6 15 5 21 M8 10 Q9 17 7 24 M11 12 Q12 19 10 26 M17 12 Q16 18 18 27 M20 10 Q19 16 21 25 M23 9 Q22 15 24 22"/>
<path d="M6 6 L16 10 M9 4.5 L19 9 M12 3 L22 7.5"/></g>
<path d="M2 7 L14 1.5 L27 6 L26 22 L14 29 L3 22Z" fill="none" stroke="#3a1a00" stroke-width=".8"/></g></svg>
<div class="a" style="left:1244px;top:1075px;width:157px;height:23px;background:#6a6570;"></div>
<div class="a t" style="left:1273.00px;top:1075.21px;font-size:18px;line-height:20.11px;color:#d0d0d0;font-family:'Liberation Sans',sans-serif;letter-spacing:-0.291px;">Material Shader</div>
<div class="a" style="left:1401px;top:1076px;width:21px;height:22px;background:#e8e8e8;"></div>
<svg class="a" style="left:1405px;top:1080px;" width="14" height="14" viewBox="0 0 14 14"><path d="M3 2 L12 7 L3 12Z" fill="#111"/></svg>
<div class="a" style="left:0px;top:1135px;width:1678px;height:78px;background:#2e2e2e;border-top:1px solid #4a4a4a;"></div>
<div class="a" style="left:1px;top:1136px;width:17px;height:77px;background:linear-gradient(90deg,#3a3a3a,#4a4a4a 40%,#383838);"></div>
<svg class="a" style="left:4px;top:1199px;" width="10" height="9" viewBox="0 0 10 9"><path d="M1 1h8L5 8z" fill="#000"/></svg>
<div class="a" style="left:18px;top:1136px;width:2px;height:77px;background:#1c1c1c;"></div>
<div class="a" style="left:33px;top:1153px;width:48px;height:43px;background:linear-gradient(#4a4a4a,#3a3a3a);border:1px solid #1e1e1e;"></div>
<div class="a" style="left:81px;top:1153px;width:48px;height:43px;background:linear-gradient(#4a4a4a,#3a3a3a);border:1px solid #1e1e1e;"></div>
<div class="a" style="left:129px;top:1153px;width:48px;height:43px;background:linear-gradient(#4a4a4a,#3a3a3a);border:1px solid #1e1e1e;"></div>
<div class="a" style="left:177px;top:1153px;width:47px;height:43px;background:#b8862a;border:1px solid #1e1e1e;"></div>
<div class="a" style="left:224px;top:1153px;width:48px;height:43px;background:linear-gradient(#4a4a4a,#3a3a3a);border:1px solid #1e1e1e;"></div>
<div class="a" style="left:272px;top:1153px;width:48px;height:43px;background:linear-gradient(#4a4a4a,#3a3a3a);border:1px solid #1e1e1e;"></div>
<svg class="a" style="left:37px;top:1160px;" width="42" height="30" viewBox="0 0 42 30"><rect x="2" y="7" width="6" height="16" fill="#ddd" stroke="#222"/><path d="M9 15 L21 7 V23Z M22 15 L34 7 V23Z" fill="#d8d8d8" stroke="#222"/></svg>
<svg class="a" style="left:85px;top:1160px;" width="42" height="30" viewBox="0 0 42 30"><rect x="8" y="7" width="6" height="16" fill="#7fce4a" stroke="#222"/><rect x="10" y="9" width="2" height="12" fill="#c0f090"/><path d="M16 15 L30 7 V23Z" fill="#d8d8d8" stroke="#222"/></svg>
<svg class="a" style="left:133px;top:1160px;" width="42" height="30" viewBox="0 0 42 30"><path d="M8 15 L26 4 V26Z" fill="#d8d8d8" stroke="#222"/></svg>
<svg class="a" style="left:181px;top:1160px;" width="40" height="30" viewBox="0 0 40 30"><rect x="9" y="3" width="24" height="24" fill="#e4e6e4" stroke="#333" stroke-width="2"/></svg>
<svg class="a" style="left:228px;top:1160px;" width="42" height="30" viewBox="0 0 42 30"><path d="M14 4 L32 15 L14 26Z" fill="#d8d8d8" stroke="#222"/></svg>
<svg class="a" style="left:276px;top:1160px;" width="42" height="30" viewBox="0 0 42 30"><path d="M8 7 L22 15 L8 23Z" fill="#d8d8d8" stroke="#222"/><rect x="25" y="7" width="6" height="16" fill="#7fce4a" stroke="#222"/><rect x="27" y="9" width="2" height="12" fill="#c0f090"/></svg>
<div class="a" style="left:335px;top:1161px;width:89px;height:28px;background:#131313;"></div>
<div class="a t" style="left:339.00px;top:1165.34px;font-size:20px;line-height:22.66px;color:#f0f0f0;font-family:'Liberation Mono',monospace;">1</div>
<div class="a" style="left:424px;top:1159px;width:58px;height:32px;background:linear-gradient(#4a4a4a,#3a3a3a);border:1px solid #1e1e1e;"></div>
<div class="a" style="left:452px;top:1160px;width:1px;height:30px;background:#222;"></div>
<svg class="a" style="left:428px;top:1167px;" width="22" height="16" viewBox="0 0 22 16"><path d="M3 8H19" stroke="#c8c8c8" stroke-width="3"/></svg>
<svg class="a" style="left:457px;top:1164px;" width="22" height="22" viewBox="0 0 22 22"><path d="M11 3V19M3 11H19" stroke="#c8c8c8" stroke-width="3"/></svg>
<div class="a" style="left:498px;top:1161px;width:74px;height:28px;background:#131313;"></div>
<div class="a t" style="left:502.00px;top:1165.34px;font-size:20px;line-height:22.66px;color:#f0f0f0;font-family:'Liberation Mono',monospace;">1</div>
<div class="a" style="left:576px;top:1140px;width:800px;height:54px;background:#2e2e2e;border-top:1px solid #d8d8d8;border-left:1px solid #d8d8d8;border-right:1px solid #d8d8d8;"></div>
<svg class="a" style="left:576px;top:1140px;" width="800" height="54" viewBox="0 0 800 54"><path d="M0 27.5 H800" stroke="#c8c8c8" stroke-width="1"/><path d="M17.7 22 V33" stroke="#bdbdbd" stroke-width="1"/><path d="M37.7 22 V33" stroke="#bdbdbd" stroke-width="1"/><path d="M57.6 22 V33" stroke="#bdbdbd" stroke-width="1"/><path d="M77.6 20 V35" stroke="#d8d8d8" stroke-width="1.6"/><path d="M97.6 22 V33" stroke="#bdbdbd" stroke-width="1"/><path d="M117.5 22 V33" stroke="#bdbdbd" stroke-width="1"/><path d="M137.5 22 V33" stroke="#bdbdbd" stroke-width="1"/><path d="M157.4 20 V35" stroke="#d8d8d8" stroke-width="1.6"/><path d="M177.4 22 V33" stroke="#bdbdbd" stroke-width="1"/><path d="M197.4 22 V33" stroke="#bdbdbd" stroke-width="1"/><path d="M217.3 22 V33" stroke="#bdbdbd" stroke-width="1"/><path d="M237.3 20 V35" stroke="#d8d8d8" stroke-width="1.6"/><path d="M257.2 22 V33" stroke="#bdbdbd" stroke-width="1"/><path d="M277.2 22 V33" stroke="#bdbdbd" stroke-width="1"/><path d="M297.1 22 V33" stroke="#bdbdbd" stroke-width="1"/><path d="M317.1 20 V35" stroke="#d8d8d8" stroke-width="1.6"/><path d="M337.1 22 V33" stroke="#bdbdbd" stroke-width="1"/><path d="M357.0 22 V33" stroke="#bdbdbd" stroke-width="1"/><path d="M377.0 22 V33" stroke="#bdbdbd" stroke-width="1"/><path d="M396.9 20 V35" stroke="#d8d8d8" stroke-width="1.6"/><path d="M416.9 22 V33" stroke="#bdbdbd" stroke-width="1"/><path d="M436.9 22 V33" stroke="#bdbdbd" stroke-width="1"/><path d="M456.8 22 V33" stroke="#bdbdbd" stroke-width="1"/><path d="M476.8 20 V35" stroke="#d8d8d8" stroke-width="1.6"/><path d="M496.7 22 V33" stroke="#bdbdbd" stroke-width="1"/><path d="M516.7 22 V33" stroke="#bdbdbd" stroke-width="1"/><path d="M536.7 22 V33" stroke="#bdbdbd" stroke-width="1"/><path d="M556.6 20 V35" stroke="#d8d8d8" stroke-width="1.6"/><path d="M576.6 22 V33" stroke="#bdbdbd" stroke-width="1"/><path d="M596.5 22 V33" stroke="#bdbdbd" stroke-width="1"/><path d="M616.5 22 V33" stroke="#bdbdbd" stroke-width="1"/><path d="M636.4 20 V35" stroke="#d8d8d8" stroke-width="1.6"/><path d="M656.4 22 V33" stroke="#bdbdbd" stroke-width="1"/><path d="M676.4 22 V33" stroke="#bdbdbd" stroke-width="1"/><path d="M696.3 22 V33" stroke="#bdbdbd" stroke-width="1"/><path d="M716.3 20 V35" stroke="#d8d8d8" stroke-width="1.6"/><path d="M736.2 22 V33" stroke="#bdbdbd" stroke-width="1"/><path d="M756.2 22 V33" stroke="#bdbdbd" stroke-width="1"/><path d="M776.2 22 V33" stroke="#bdbdbd" stroke-width="1"/><path d="M796.1 20 V35" stroke="#d8d8d8" stroke-width="1.6"/></svg>
<div class="a t" style="left:655.11px;top:1141.81px;font-size:19px;line-height:21.22px;color:#cfcfcf;font-family:'Liberation Sans',sans-serif;letter-spacing:-2.135px;">24</div>
<div class="a t" style="left:734.94px;top:1141.81px;font-size:19px;line-height:21.22px;color:#cfcfcf;font-family:'Liberation Sans',sans-serif;letter-spacing:-2.135px;">48</div>
<div class="a t" style="left:814.77px;top:1141.81px;font-size:19px;line-height:21.22px;color:#cfcfcf;font-family:'Liberation Sans',sans-serif;letter-spacing:-2.135px;">72</div>
<div class="a t" style="left:894.61px;top:1141.81px;font-size:19px;line-height:21.22px;color:#cfcfcf;font-family:'Liberation Sans',sans-serif;letter-spacing:-2.135px;">96</div>
<div class="a t" style="left:974.44px;top:1141.81px;font-size:19px;line-height:21.22px;color:#cfcfcf;font-family:'Liberation Sans',sans-serif;letter-spacing:-0.851px;">120</div>
<div class="a t" style="left:1054.28px;top:1141.81px;font-size:19px;line-height:21.22px;color:#cfcfcf;font-family:'Liberation Sans',sans-serif;letter-spacing:-0.851px;">144</div>
<div class="a t" style="left:1134.11px;top:1141.81px;font-size:19px;line-height:21.22px;color:#cfcfcf;font-family:'Liberation Sans',sans-serif;letter-spacing:-0.851px;">168</div>
<div class="a t" style="left:1213.94px;top:1141.81px;font-size:19px;line-height:21.22px;color:#cfcfcf;font-family:'Liberation Sans',sans-serif;letter-spacing:-0.851px;">192</div>
<div class="a t" style="left:1293.78px;top:1141.81px;font-size:19px;line-height:21.22px;color:#cfcfcf;font-family:'Liberation Sans',sans-serif;letter-spacing:-0.851px;">216</div>
<div class="a" style="left:577px;top:1141px;width:31px;height:24px;background:#050505;border:1px solid #f0f0f0;"></div>
<div class="a t" style="left:585.83px;top:1139.78px;font-size:24px;line-height:26.81px;color:#f6f6f6;font-family:'Liberation Sans',sans-serif;">1</div>
<div class="a" style="left:577px;top:1195px;width:18px;height:13px;background:linear-gradient(#4a4a4a,#3c3c3c);"></div>
<svg class="a" style="left:580px;top:1199px;" width="12" height="4" viewBox="0 0 12 4"><path d="M1 3h2M5 3h2M9 3h2" stroke="#111" stroke-width="2"/></svg>
<div class="a" style="left:596px;top:1195px;width:780px;height:13px;background:linear-gradient(#575757,#434343);"></div>
<svg class="a" style="left:1361px;top:1199px;" width="12" height="4" viewBox="0 0 12 4"><path d="M1 3h2M5 3h2M9 3h2" stroke="#111" stroke-width="2"/></svg>
<svg class="a" style="left:970px;top:1199px;" width="14" height="4" viewBox="0 0 14 4"><path d="M1 3h2M5 3h2M9 3h2M13 3h2" stroke="#111" stroke-width="2"/></svg>
<div class="a" style="left:1382px;top:1161px;width:73px;height:28px;background:#131313;"></div>
<div class="a t" style="left:1386.00px;top:1165.34px;font-size:20px;line-height:22.66px;color:#f0f0f0;font-family:'Liberation Mono',monospace;letter-spacing:-0.002px;">240</div>
<div class="a" style="left:1472px;top:1155px;width:37px;height:37px;background:linear-gradient(#4a4a4a,#3a3a3a);border:1px solid #1e1e1e;"></div>
<svg class="a" style="left:1476px;top:1159px;" width="30" height="30" viewBox="0 0 30 30"><circle cx="9" cy="9" r="6.5" fill="#ddd" stroke="#333" stroke-width="1"/><circle cx="8" cy="8" r="2.2" fill="#444"/><path d="M13 13 L25 25 M19 19 L22 16 M22 22 L25 19" stroke="#ddd" stroke-width="3.5"/></svg>
<div class="a" style="left:1517px;top:1155px;width:148px;height:37px;background:linear-gradient(#4a4a4a,#3a3a3a);border:1px solid #1e1e1e;"></div>
<div class="a" style="left:1554px;top:1156px;width:1px;height:35px;background:#222;"></div>
<div class="a" style="left:1591px;top:1156px;width:1px;height:35px;background:#222;"></div>
<div class="a" style="left:1628px;top:1156px;width:1px;height:35px;background:#222;"></div>
<svg class="a" style="left:1520px;top:1158px;" width="32" height="32" viewBox="0 0 32 32"><circle cx="15" cy="15" r="13" fill="#2a2e40" stroke="#e8e8e8" stroke-width="2.5"/><circle cx="15" cy="15" r="9.5" fill="none" stroke="#1a1a2a" stroke-width="1"/><path d="M15 9V21M9 15H21" stroke="#eee" stroke-width="2.5"/></svg>
<svg class="a" style="left:1557px;top:1158px;" width="32" height="32" viewBox="0 0 32 32"><path d="M4 20 H26 Q28 8 16 8 Q10 8 8 12 L10 4 L2 10 L10 16 L9 13 Q12 11 16 11 Q22 11 22 17 H4Z" fill="#f0f0f0" stroke="#111" stroke-width="1.5"/><path d="M22 24 L28 24 L25 28Z" fill="#8a8a8a"/></svg>
<svg class="a" style="left:1594px;top:1158px;" width="32" height="32" viewBox="0 0 32 32"><path d="M4 11 H10 L18 4 V28 L10 21 H4Z" fill="#555" stroke="#111" stroke-width="1.5"/><ellipse cx="20" cy="16" rx="8" ry="13" fill="#d0d0d0" stroke="#111" stroke-width="1.5"/><ellipse cx="20" cy="16" rx="4" ry="7" fill="#999"/></svg>
<svg class="a" style="left:1633px;top:1160px;" width="28" height="28" viewBox="0 0 28 28"><rect x="1" y="2" width="20" height="20" fill="#e8e8e8" stroke="#222"/><rect x="2" y="3" width="18" height="4" fill="#888"/><path d="M12 12 L24 20 L18 21 L15 26Z" fill="#111" stroke="#eee" stroke-width="1.2"/></svg>
<div class="a" style="left:0px;top:1213px;width:1678px;height:45px;background:#1c1c1c;border-top:1px solid #0c0c0c;"></div>
<div class="a t" style="left:3.00px;top:1224.40px;font-size:20px;line-height:22.34px;color:#d2d2d2;font-family:'Liberation Sans',sans-serif;letter-spacing:0.490px;">Hold down Ctrl to snap to rounded values</div>
<div class="a" style="left:1378px;top:1214px;width:37px;height:42px;background:linear-gradient(#4a4a4a,#3a3a3a);"></div>
<svg class="a" style="left:1381px;top:1220px;" width="34" height="34" viewBox="0 0 34 34"><path d="M3 15 Q2 7 11 5 Q19 2 26 7 Q31 11 29 18 Q27 23 21 24 Q17 29 11 25 Q5 24 4 20 Q2 18 3 15Z" fill="#d2d2d2" stroke="#555" stroke-width=".8"/>
<g stroke="#8a8a8a" stroke-width="1" fill="none"><path d="M8 9 Q11 12 9 16 Q12 19 10 22 M14 6 Q16 10 14 13 Q17 16 15 20 M20 6 Q22 10 20 14 Q23 17 21 22 M25 9 Q26 13 24 17 M5 15 Q9 14 12 15 M16 11 Q20 12 24 11"/></g>
<path d="M25 26 L31 30 L25 34Z" fill="#888"/></svg>
<div class="a" style="left:1415px;top:1214px;width:35px;height:42px;background:linear-gradient(#4a4a4a,#3a3a3a);border-left:1px solid #2a2a2a;"></div>
<svg class="a" style="left:1419px;top:1220px;" width="30" height="30" viewBox="0 0 30 30"><g transform="scale(1.0)"><g fill="none" stroke="#181c2c" stroke-width="7.5" stroke-linecap="butt"><path d="M4 13 C5 3 16 0.5 22 7"/><path d="M24 15 C23 25 12 27.5 6 21"/></g>
<polygon points="27.5,0.5 27,15 17,14.5" fill="#181c2c" stroke="#181c2c" stroke-width="2.5" stroke-linejoin="round"/><polygon points="0.5,27.5 1,13 11,13.5" fill="#181c2c" stroke="#181c2c" stroke-width="2.5" stroke-linejoin="round"/>
<g fill="none" stroke="#b8b8b8" stroke-width="4.6" stroke-linecap="butt"><path d="M4 13 C5 3 16 0.5 22 7"/><path d="M24 15 C23 25 12 27.5 6 21"/></g>
<polygon points="27.5,0.5 27,15 17,14.5" fill="#b8b8b8"/><polygon points="0.5,27.5 1,13 11,13.5" fill="#b8b8b8"/></g></svg>
<div class="a" style="left:1450px;top:1214px;width:190px;height:42px;background:linear-gradient(#4c4c4c,#3a3a3a);border-left:1px solid #555;"></div>
<div class="a" style="left:1615px;top:1214px;width:25px;height:42px;background:#333;"></div>
<svg class="a" style="left:1622px;top:1226px;" width="10" height="18" viewBox="0 0 10 18"><path d="M1 7 L5 1 L9 7Z M1 11 L5 17 L9 11Z" fill="#777"/></svg>
<div class="a t" style="left:1468.00px;top:1222.40px;font-size:20px;line-height:22.34px;color:#d0d0d0;font-family:'Liberation Sans',sans-serif;letter-spacing:0.481px;">Auto Update</div>
<div class="a" style="left:1640px;top:1214px;width:38px;height:42px;background:#2a2a2a;"></div>
</div></body></html>
